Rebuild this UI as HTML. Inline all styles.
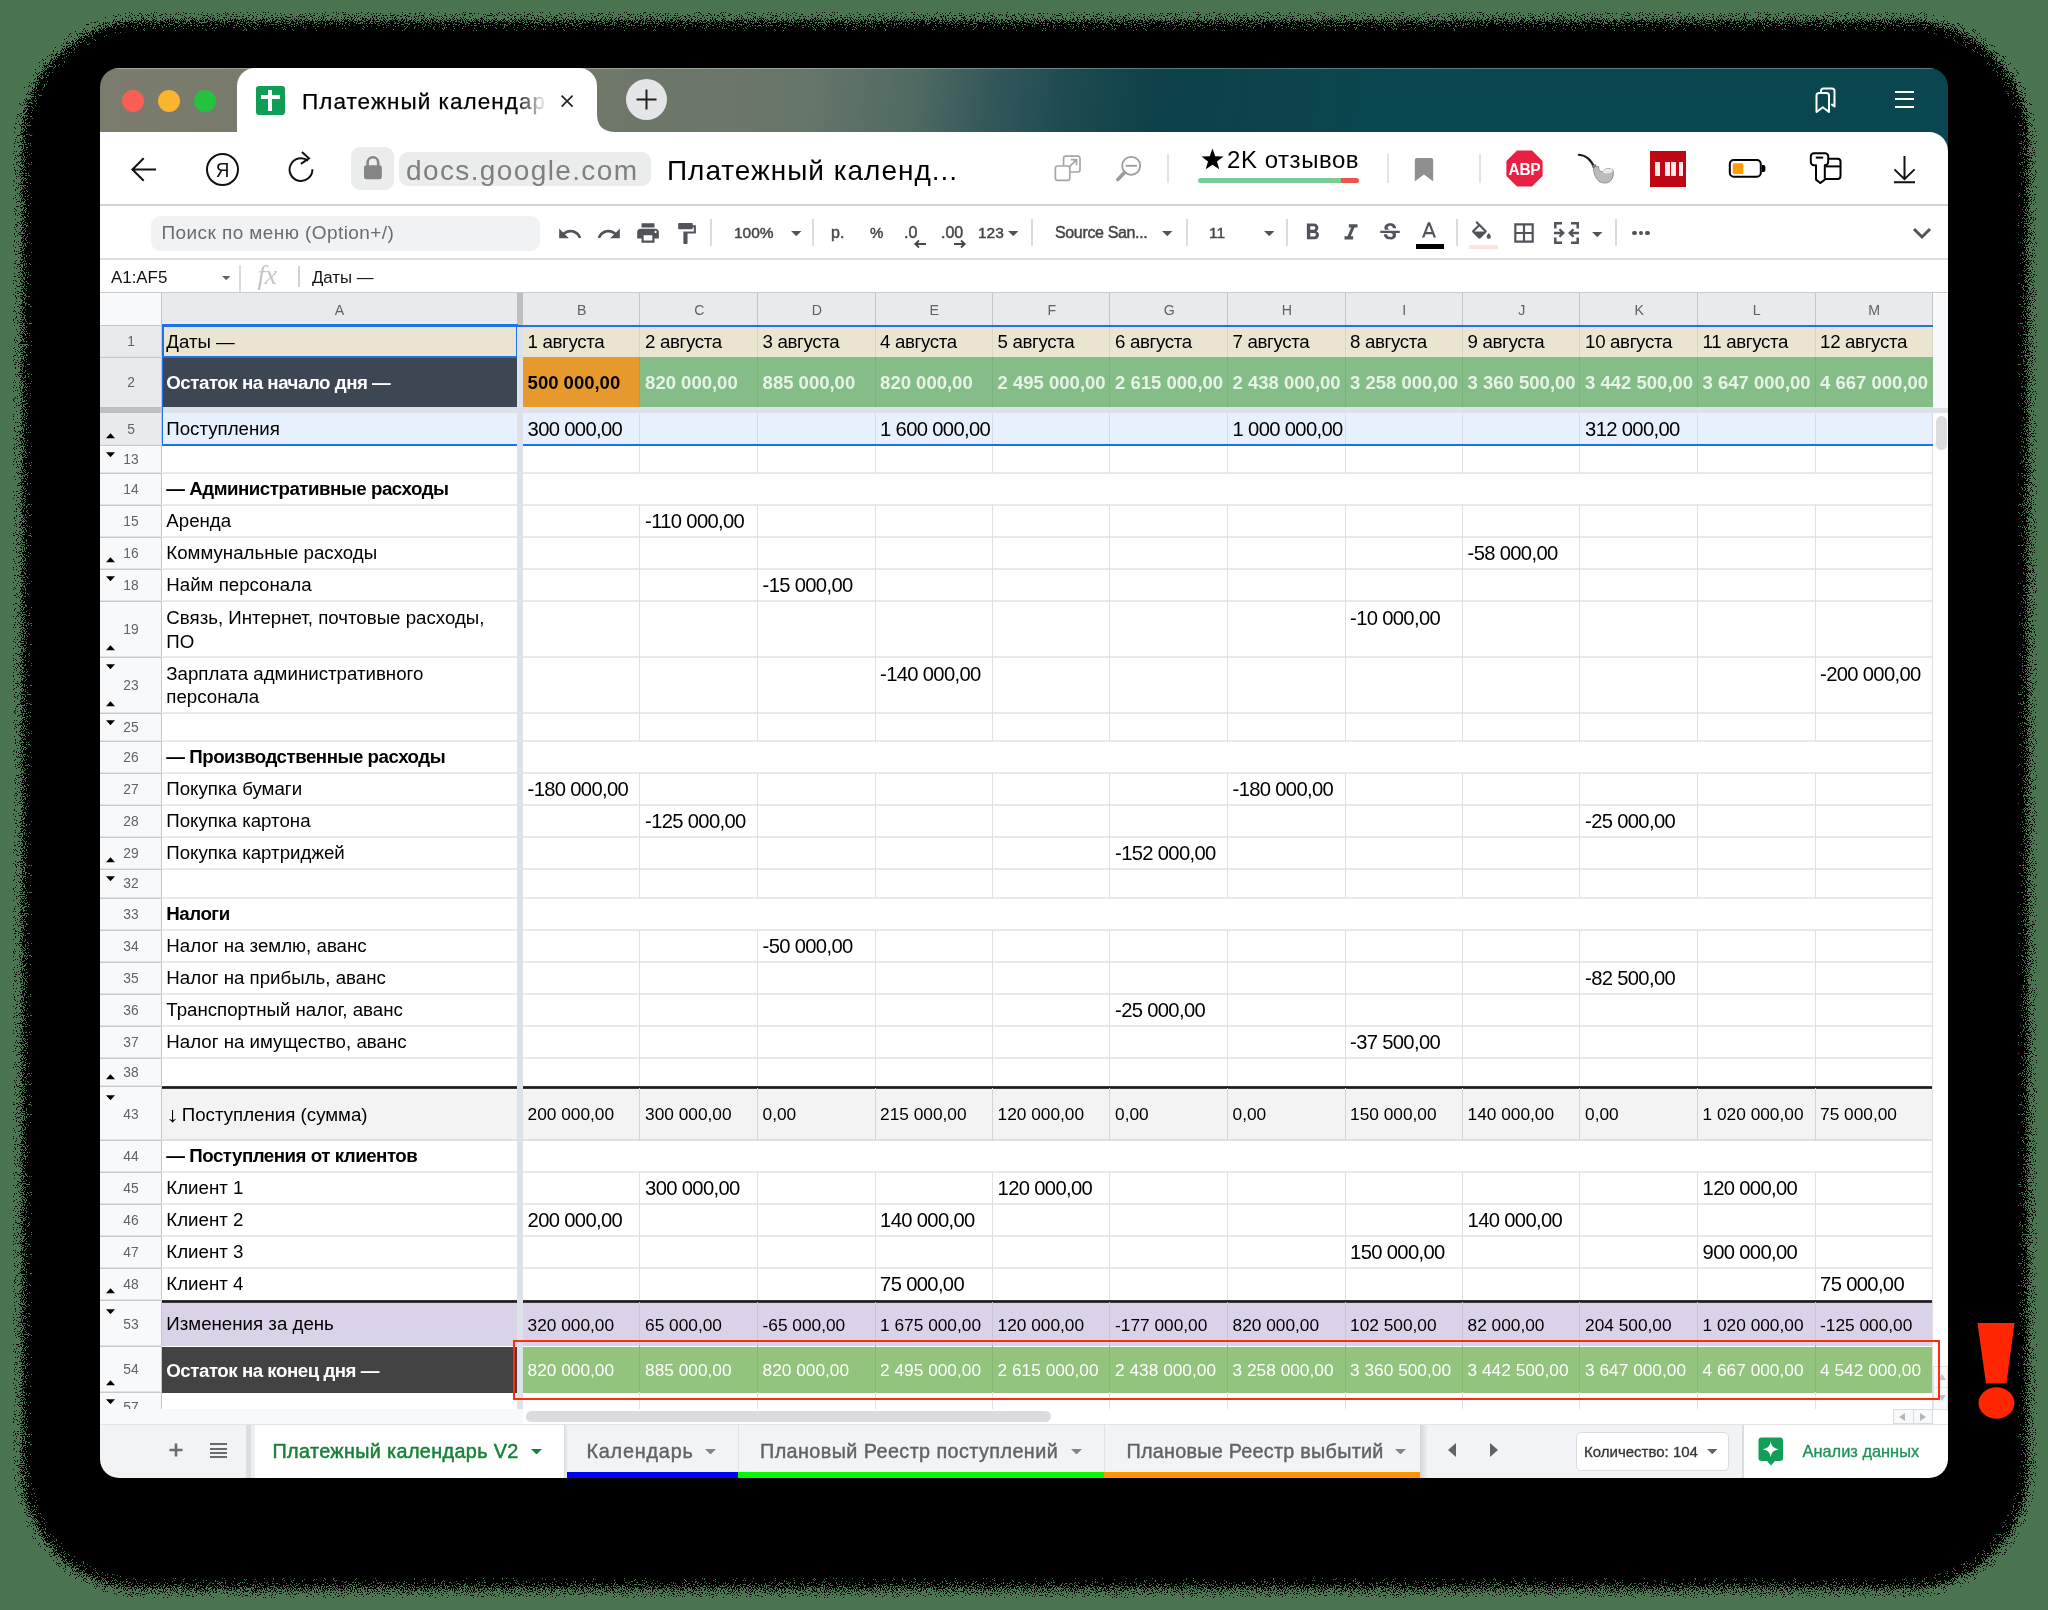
<!DOCTYPE html>
<html><head><meta charset="utf-8"><title>Платежный календарь</title><style>
*{box-sizing:border-box}
html,body{margin:0;padding:0}
body{width:2048px;height:1610px;overflow:hidden;position:relative;background:#4a7350;font-family:"Liberation Sans",sans-serif}
.a{position:absolute}
.t{position:absolute;white-space:nowrap;line-height:1}
#win{position:absolute;left:0;top:0;width:2048px;height:1610px;clip-path:inset(68px 100px 132px 100px round 19px);will-change:transform}
.c{position:absolute;white-space:nowrap;font-size:18.7px;line-height:23.4px;color:#000}
.b{font-weight:bold;letter-spacing:-.47px}
.rh{position:absolute;left:100px;width:62px;text-align:center;font-size:13.8px;color:#5f6368;line-height:16px;height:16px}
.ch{position:absolute;top:294.8px;height:31px;text-align:center;font-size:14.2px;color:#5f6368;line-height:31px}
.tb{position:absolute;font-size:16px;color:#444746;white-space:nowrap;line-height:1;-webkit-text-stroke:.45px #444746}
.sep{position:absolute;width:2px;top:219px;height:27px;background:#dadce0}
.hl{position:absolute;height:2px;background:#e9e9e9}
.vl{position:absolute;width:1px;background:#e1e1e1}
.st{position:absolute;top:1442.3px;font-size:19.8px;line-height:1;white-space:nowrap;color:#5f6368;-webkit-text-stroke:.4px #5f6368;letter-spacing:.4px}
</style></head><body>
<svg class="a" style="left:0;top:0" width="2048" height="1610" viewBox="0 0 2048 1610">
<defs><filter id="dz" x="-3%" y="-3%" width="106%" height="106%" color-interpolation-filters="sRGB">
<feGaussianBlur in="SourceAlpha" stdDeviation="4.6" result="bl"/>
<feTurbulence type="fractalNoise" baseFrequency="0.9" numOctaves="1" seed="7" result="nz"/>
<feColorMatrix in="nz" type="matrix" values="0 0 0 0 0  0 0 0 0 0  0 0 0 0 0  3 0 0 0 -1" result="na"/>
<feComposite in="bl" in2="na" operator="arithmetic" k1="0" k2="1" k3="-1" k4="0" result="d"/>
<feComponentTransfer in="d"><feFuncR type="discrete" tableValues="0"/><feFuncG type="discrete" tableValues="0"/><feFuncB type="discrete" tableValues="0"/><feFuncA type="discrete" tableValues="0 1 1 1 1 1 1 1 1 1 1 1 1 1 1 1 1 1 1 1 1 1 1 1 1 1 1 1 1 1 1 1"/></feComponentTransfer>
</filter></defs>
<rect x="21.5" y="20" width="2007.5" height="1569.5" rx="120" ry="120" fill="#000" filter="url(#dz)"/>
<rect x="32" y="31" width="1986" height="1547" rx="110" fill="#000"/>
</svg>
<svg class="a" style="left:1970px;top:1316px" width="52" height="110" viewBox="1970 1316 52 110"><path d="M1977.5 1323 H2014.5 L2006.5 1383.5 H1986Z" fill="#ff2600"/><ellipse cx="1996.5" cy="1403" rx="18" ry="15.7" fill="#ff2600"/></svg>
<div id="win">
<div class="a" style="left:100px;top:68px;width:1848px;height:1410px;background:#fff"></div>
<div class="a" style="left:100px;top:68px;width:1848px;height:90px;background:linear-gradient(96deg,#7b7c6d 0%,#6f7869 27%,#67766a 38%,#4f6a62 44%,#34585a 48%,#1c4a50 52.5%,#0e4149 57%,#0a4750 70%,#0a4650 100%)"></div>
<div class="a" style="left:100px;top:68px;width:1848px;height:1px;background:rgba(255,255,255,.3)"></div>
<div class="a" style="left:100px;top:132px;width:1848px;height:75px;background:#fff;border-top-right-radius:19px"></div>
<div class="a" style="left:237px;top:68px;width:360px;height:66px;background:#fff;border-radius:18px 18px 0 0"></div>
<svg class="a" style="left:597px;top:114px" width="20" height="18" viewBox="0 0 20 18"><path d="M0 0 C0 12 6 18 20 18 L0 18Z" fill="#fff"/></svg>
<div class="a" style="left:122px;top:89.5px;width:22px;height:22px;border-radius:50%;background:#f95f57"></div>
<div class="a" style="left:158px;top:89.5px;width:22px;height:22px;border-radius:50%;background:#fbb42d"></div>
<div class="a" style="left:194px;top:89.5px;width:22px;height:22px;border-radius:50%;background:#25c23d"></div>
<div class="a" style="left:256px;top:86px;width:29px;height:29px;border-radius:3px;background:#0f9d58"></div>
<div class="a" style="left:261px;top:95px;width:19px;height:4px;background:#fff"></div>
<div class="a" style="left:268px;top:90px;width:4px;height:21px;background:#fff"></div>
<div class="t" style="left:302px;top:88px;height:28px;line-height:28px;font-size:22.5px;letter-spacing:1.05px;color:#000;-webkit-text-stroke:.25px #000;width:250px;overflow:hidden;-webkit-mask-image:linear-gradient(90deg,#000 85%,transparent 98%)">Платежный календарь V2</div>
<svg class="a" style="left:559px;top:93px" width="16" height="16" viewBox="0 0 16 16"><path d="M2.6 2.6 L13.6 13.6 M13.6 2.6 L2.6 13.6" stroke="#222" stroke-width="1.6" fill="none"/></svg>
<div class="a" style="left:626px;top:79px;width:41px;height:41px;border-radius:50%;background:#e4e5e7"></div>
<svg class="a" style="left:626px;top:79px" width="41" height="41" viewBox="0 0 41 41"><path d="M20.5 10.5 V30.5 M10.5 20.5 H30.5" stroke="#222" stroke-width="2" fill="none"/></svg>
<svg class="a" style="left:1810px;top:84px" width="32" height="32" viewBox="0 0 32 32" fill="none" stroke="#fff" stroke-width="2" stroke-linejoin="round"><path d="M6.5 11.5 a2.5 2.5 0 0 1 2.5-2.5 h7.5 a2.5 2.5 0 0 1 2.5 2.5 V28 l-6.2-4.8 L6.5 28Z"/><path d="M11 8.6 V7 a2.5 2.5 0 0 1 2.5-2.5 H22 a2.5 2.5 0 0 1 2.5 2.5 V22.5 l-3.2-2.4"/></svg>
<div class="a" style="left:1895px;top:90.8px;width:18.5px;height:2px;background:#fff"></div>
<div class="a" style="left:1895px;top:98.3px;width:18.5px;height:2px;background:#fff"></div>
<div class="a" style="left:1895px;top:105.9px;width:18.5px;height:2px;background:#fff"></div>
<svg class="a" style="left:126px;top:152px" width="36" height="36" viewBox="126 152 36 36" fill="none" stroke="#111" stroke-width="2"><path d="M156 169.5 H132.5 M143.7 158.2 L132.4 169.5 L143.7 180.8"/></svg>
<div class="a" style="left:206px;top:152.5px;width:33px;height:33px;border-radius:50%;border:2px solid #111"></div>
<div class="t" style="left:206px;top:159px;width:33px;text-align:center;font-size:21px;color:#111;transform:scaleX(.9)">Я</div>
<svg class="a" style="left:284px;top:148px" width="36" height="40" viewBox="284 148 36 40" fill="none" stroke="#111" stroke-width="2" stroke-linejoin="miter"><path d="M308 160.6 A11.4 11.4 0 1 0 312.4 169.3"/><path d="M301.9 152 L309 158.3 L300.9 163.9"/></svg>
<div class="a" style="left:351px;top:147px;width:43px;height:43px;border-radius:9px;background:#ebecec"></div>
<svg class="a" style="left:351px;top:147px" width="43" height="43" viewBox="351 147 43 43"><rect x="364" y="165.3" width="17.8" height="14" rx="2.2" fill="#858585"/><path d="M367.6 166 V162.6 a5.3 5.3 0 0 1 10.6 0 V166" fill="none" stroke="#858585" stroke-width="2.6"/></svg>
<div class="a" style="left:398.5px;top:151.5px;width:252px;height:34.5px;border-radius:9px;background:#ebecec"></div>
<div class="t" style="left:406px;top:156.5px;font-size:28px;letter-spacing:1.38px;color:#7f7f7f">docs.google.com</div>
<div class="t" style="left:667px;top:156.5px;font-size:28px;letter-spacing:.98px;color:#000">Платежный календ...</div>
<svg class="a" style="left:1050px;top:150px" width="36" height="36" viewBox="1050 150 36 36" fill="none" stroke="#a6a6a6" stroke-width="1.7"><rect x="1055.4" y="166" width="14.4" height="14.4" rx="2.2"/><path d="M1063.6 165.6 V158.4 a2.2 2.2 0 0 1 2.2-2.2 H1077.8 a2.2 2.2 0 0 1 2.2 2.2 V169.8 a2.2 2.2 0 0 1-2.2 2.2 H1070.2"/><path d="M1068.8 167.3 L1076.3 159.8 M1070.8 159.6 H1076.5 V165.3"/></svg>
<svg class="a" style="left:1110px;top:150px" width="36" height="36" viewBox="1110 150 36 36" fill="none" stroke="#9b9b9b"><circle cx="1131.2" cy="165.8" r="9" stroke-width="1.8"/><path d="M1125.6 165.8 H1137" stroke-width="1.8"/><path d="M1124.6 172.6 L1117.8 179.4" stroke-width="3.6" stroke-linecap="round"/></svg>
<div class="a" style="left:1167px;top:154px;width:1.5px;height:29px;background:#e4e4e4"></div>
<div class="a" style="left:1387px;top:154px;width:1.5px;height:29px;background:#e4e4e4"></div>
<div class="a" style="left:1479px;top:154px;width:1.5px;height:29px;background:#e4e4e4"></div>
<svg class="a" style="left:1201px;top:148px" width="23" height="22" viewBox="0 0 24 23"><path d="M12 0.5 L14.9 8.6 L23.5 8.8 L16.7 14 L19.1 22.3 L12 17.4 L4.9 22.3 L7.3 14 L0.5 8.8 L9.1 8.6Z" fill="#000"/></svg>
<div class="t" style="left:1227px;top:148px;font-size:24px;letter-spacing:.55px;color:#000">2K отзывов</div>
<div class="a" style="left:1198px;top:177.5px;width:161px;height:5.5px;border-radius:3px;background:linear-gradient(90deg,#7bcb96 0,#7bcb96 143px,#ef5350 143px)"></div>
<svg class="a" style="left:1412px;top:156px" width="24" height="28" viewBox="1412 156 24 28"><path d="M1414.8 160 a2 2 0 0 1 2-2 h14.4 a2 2 0 0 1 2 2 V181.4 L1424 174.4 L1414.8 181.4Z" fill="#8f8f8f"/></svg>
<svg class="a" style="left:1502px;top:146px" width="46" height="46" viewBox="1502 146 46 46"><polygon points="1542.6,176.0 1532.0,186.6 1517.0,186.6 1506.4,176.0 1506.4,161.0 1517.0,150.4 1532.0,150.4 1542.6,161.0" fill="#ea1f44"/></svg>
<div class="t" style="left:1504.5px;top:160.5px;width:40px;text-align:center;font-size:15.5px;font-weight:bold;color:#fff;transform:scaleY(1.12);letter-spacing:-.3px">ABP</div>
<svg class="a" style="left:1574px;top:150px" width="44" height="38" viewBox="1574 150 44 38"><path d="M1578.8 154.8 C1586.5 155.4 1591.5 160 1594.6 168.4" fill="none" stroke="#1a1a1a" stroke-width="2.1" stroke-linecap="round"/><path d="M1592.2 166.8 L1596.2 165.4" stroke="#777" stroke-width="2.6"/><path d="M1593.4 168.6 C1594.2 176 1597.2 183.2 1605.2 183 C1611.6 182.8 1614 176.6 1613.2 170.4 C1610 167.6 1605 168.2 1602.6 171.4 C1600.2 172.2 1598.4 169.8 1598.8 166.8 C1596.8 166 1594.6 166.8 1593.4 168.6Z" fill="#b9bcbc" stroke="#8d9090" stroke-width="1"/><ellipse cx="1607.8" cy="171" rx="5" ry="2.2" fill="#e9eaea" transform="rotate(-8 1607.8 171)"/></svg>
<div class="a" style="left:1650px;top:150.5px;width:36px;height:36px;background:#be0712"></div>
<div class="a" style="left:1655.2px;top:161.6px;width:4.6px;height:14px;background:#fbeaea"></div>
<div class="a" style="left:1664.8px;top:161.6px;width:4.8px;height:14px;background:#fbeaea"></div>
<div class="a" style="left:1671px;top:161.6px;width:4.6px;height:14px;background:#fbeaea"></div>
<div class="a" style="left:1678.6px;top:161.6px;width:4.6px;height:14px;background:#fbeaea"></div>
<svg class="a" style="left:1724px;top:154px" width="46" height="30" viewBox="1724 154 46 30"><rect x="1729.8" y="160.1" width="31" height="16.6" rx="4" fill="#fff" stroke="#000" stroke-width="2"/><path d="M1762 165 h1.4 a2 2 0 0 1 2 2 v3 a2 2 0 0 1-2 2 h-1.4Z" fill="#000"/><rect x="1732.8" y="163.2" width="10.6" height="10.8" rx="1.6" fill="#ff9a00"/></svg>
<svg class="a" style="left:1806px;top:148px" width="40" height="40" viewBox="1806 148 40 40" fill="none" stroke="#000" stroke-width="2" stroke-linejoin="round"><path d="M1827.4 158.8 H1837.5 a3 3 0 0 1 3 3 V176 a3 3 0 0 1-3 3 H1825"/><path d="M1825.5 166.4 H1840.5"/><path d="M1814 153.2 H1825 a3.2 3.2 0 0 1 3.2 3.2 V162 a3.2 3.2 0 0 1-3.2 3.2 H1824.8 V179.6 L1820.3 183 L1816 179.6 V165.2 H1814 a3.2 3.2 0 0 1-3.2-3.2 V156.4 a3.2 3.2 0 0 1 3.2-3.2Z" fill="#fff"/><path d="M1815.8 157.6 H1823.2"/></svg>
<svg class="a" style="left:1888px;top:150px" width="34" height="38" viewBox="1888 150 34 38" fill="none" stroke="#111" stroke-width="2"><path d="M1904.5 156 V178.4 M1894.4 169.4 L1904.5 179.2 L1914.6 169.4 M1894 182.2 H1915"/></svg>
<div class="a" style="left:100px;top:204px;width:1848px;height:2px;background:#d3d4d6"></div>
<div class="a" style="left:151px;top:215.5px;width:389px;height:35px;border-radius:9px;background:#f0f2f4"></div>
<div class="t" style="left:161.5px;top:223px;font-size:19px;letter-spacing:.42px;color:#6b6c6e">Поиск по меню (Option+/)</div>
<svg class="a" style="left:557px;top:220.5px" width="26" height="26" viewBox="0 0 24 24" fill="#50545a"><path d="M12.5 8c-2.65 0-5.05.99-6.9 2.6L2 7v9h9l-3.62-3.62c1.39-1.16 3.16-1.88 5.12-1.88 3.54 0 6.55 2.31 7.6 5.5l2.37-.78C21.08 11.03 17.15 8 12.5 8z"/></svg>
<svg class="a" style="left:596px;top:220.5px" width="26" height="26" viewBox="0 0 24 24" fill="#50545a"><path d="M18.4 10.6C16.55 8.99 14.15 8 11.5 8c-4.65 0-8.58 3.03-9.96 7.22L3.9 16c1.05-3.19 4.05-5.5 7.6-5.5 1.95 0 3.73.72 5.12 1.88L13 16h9V7l-3.6 3.6z"/></svg>
<svg class="a" style="left:634.5px;top:220px" width="26" height="26" viewBox="0 0 24 24" fill="#50545a"><path d="M19 8H5c-1.66 0-3 1.34-3 3v6h4v4h12v-4h4v-6c0-1.66-1.34-3-3-3zm-3 11H8v-5h8v5zm3-7c-.55 0-1-.45-1-1s.45-1 1-1 1 .45 1 1-.45 1-1 1zm-1-9H6v4h12V3z"/></svg>
<svg class="a" style="left:673.5px;top:220.5px" width="25" height="25" viewBox="0 0 24 24" fill="#50545a"><path d="M18 4V3c0-.55-.45-1-1-1H5c-.55 0-1 .45-1 1v4c0 .55.45 1 1 1h12c.55 0 1-.45 1-1V6h1v4H9v11c0 .55.45 1 1 1h2c.55 0 1-.45 1-1v-9h8V4h-3z"/></svg>
<div class="sep" style="left:710px"></div>
<div class="sep" style="left:812px"></div>
<div class="sep" style="left:1031px"></div>
<div class="sep" style="left:1185.5px"></div>
<div class="sep" style="left:1286px"></div>
<div class="sep" style="left:1456px"></div>
<div class="sep" style="left:1614.5px"></div>
<div class="tb" style="left:734px;top:225px;font-size:15.5px">100%</div>
<svg class="a" style="left:791px;top:231px" width="10.5" height="5.2" viewBox="0 0 10 5"><path d="M0 0 H10 L5 5Z" fill="#50545a"/></svg>
<div class="tb" style="left:831px;top:225px">р.</div>
<div class="tb" style="left:870px;top:225px;font-size:15px">%</div>
<div class="tb" style="left:904px;top:225px">.0</div>
<div class="tb" style="left:941px;top:225px">.00</div>
<svg class="a" style="left:913px;top:239px" width="14" height="10" viewBox="0 0 14 10" fill="none" stroke="#444746" stroke-width="1.8"><path d="M13 5 H2.5 M6 1.5 L2.3 5 L6 8.5"/></svg>
<svg class="a" style="left:953px;top:239px" width="14" height="10" viewBox="0 0 14 10" fill="none" stroke="#444746" stroke-width="1.8"><path d="M1 5 H11.5 M8 1.5 L11.7 5 L8 8.5"/></svg>
<div class="tb" style="left:978px;top:225px;font-size:15.5px">123</div>
<svg class="a" style="left:1007.5px;top:231px" width="10.5" height="5.2" viewBox="0 0 10 5"><path d="M0 0 H10 L5 5Z" fill="#50545a"/></svg>
<div class="tb" style="left:1055px;top:225px;letter-spacing:-.35px">Source San...</div>
<svg class="a" style="left:1162px;top:231px" width="10.5" height="5.2" viewBox="0 0 10 5"><path d="M0 0 H10 L5 5Z" fill="#50545a"/></svg>
<div class="tb" style="left:1209px;top:225px;font-size:15.5px">11</div>
<svg class="a" style="left:1263.5px;top:231px" width="10.5" height="5.2" viewBox="0 0 10 5"><path d="M0 0 H10 L5 5Z" fill="#50545a"/></svg>
<svg class="a" style="left:1298.5px;top:218.5px" width="27" height="27" viewBox="0 0 24 24" fill="#50545a"><path d="M15.6 10.79c.97-.67 1.65-1.77 1.65-2.79 0-2.26-1.75-4-4-4H7v14h7.04c2.09 0 3.71-1.7 3.71-3.79 0-1.52-.86-2.82-2.15-3.42zM10 6.5h3c.83 0 1.5.67 1.5 1.5s-.67 1.5-1.5 1.5h-3v-3zm3.5 9H10v-3h3.5c.83 0 1.5.67 1.5 1.5s-.67 1.5-1.5 1.5z"/></svg>
<svg class="a" style="left:1338px;top:219.5px" width="26" height="26" viewBox="0 0 24 24" fill="#50545a"><path d="M10 4v3h2.21l-3.42 8H6v3h8v-3h-2.21l3.42-8H18V4z"/></svg>
<svg class="a" style="left:1376.5px;top:219.5px" width="26" height="26" viewBox="0 0 24 24" fill="#50545a"><path d="M7.24 8.75c-.26-.48-.39-1.03-.39-1.67 0-.61.13-1.16.4-1.67.26-.5.63-.93 1.11-1.29.48-.35 1.05-.63 1.7-.83.66-.19 1.39-.29 2.18-.29.81 0 1.54.11 2.21.34.66.22 1.23.54 1.69.94.47.4.83.88 1.08 1.43.25.55.38 1.15.38 1.81h-3.01c0-.31-.05-.59-.15-.85-.09-.27-.24-.49-.44-.68-.2-.19-.45-.33-.75-.44-.3-.1-.66-.16-1.06-.16-.39 0-.74.04-1.03.13-.29.09-.53.21-.72.36-.19.16-.34.34-.44.55-.1.21-.15.43-.15.66 0 .48.25.88.74 1.21.38.25.77.48 1.41.7H7.39c-.05-.08-.11-.17-.15-.25zM21 12v-2H3v2h9.62c.18.07.4.14.55.2.37.17.66.34.87.51.21.17.35.36.43.57.07.2.11.43.11.69 0 .23-.05.45-.14.66-.09.2-.23.38-.42.53-.19.15-.42.26-.71.35-.29.08-.63.13-1.01.13-.43 0-.83-.04-1.18-.13s-.66-.23-.91-.42c-.25-.19-.45-.44-.59-.75-.14-.31-.25-.76-.25-1.21H6.4c0 .55.08 1.13.24 1.58.16.45.37.85.65 1.21.28.35.6.66.98.92.37.26.78.48 1.22.65.44.17.9.3 1.38.39.48.08.96.13 1.44.13.8 0 1.53-.09 2.18-.28s1.21-.45 1.67-.79c.46-.34.82-.77 1.07-1.27s.38-1.07.38-1.71c0-.6-.1-1.14-.31-1.61-.05-.11-.11-.23-.17-.33H21z"/></svg>
<svg class="a" style="left:1416px;top:218.5px" width="26" height="26" viewBox="0 0 24 24" fill="#50545a"><path d="M11 3L5.5 17h2.25l1.12-3h6.25l1.12 3h2.25L13 3h-2zm-1.38 9L12 5.67 14.38 12H9.62z"/></svg>
<div class="a" style="left:1415.5px;top:244px;width:28.5px;height:5px;background:#000"></div>
<svg class="a" style="left:1469px;top:221px" width="25" height="25" viewBox="0 0 24 24" fill="#50545a"><path d="M16.56 8.94L7.62 0 6.21 1.41l2.38 2.38-5.15 5.15c-.59.59-.59 1.54 0 2.12l5.5 5.5c.29.29.68.44 1.06.44s.77-.15 1.06-.44l5.5-5.5c.59-.58.59-1.53 0-2.12zM5.21 10L10 5.21 14.79 10H5.21zM19 11.5s-2 2.17-2 3.5c0 1.1.9 2 2 2s2-.9 2-2c0-1.33-2-3.5-2-3.5z"/></svg>
<div class="a" style="left:1469px;top:244.5px;width:28.5px;height:4.5px;background:#fbe4dd"></div>
<svg class="a" style="left:1511px;top:220px" width="26" height="26" viewBox="0 0 24 24" fill="#50545a"><path d="M3 3v18h18V3H3zm8 16H5v-6h6v6zm0-8H5V5h6v6zm8 8h-6v-6h6v6zm0-8h-6V5h6v6z"/></svg>
<svg class="a" style="left:1554px;top:222px" width="25" height="22" viewBox="0 0 25 22" fill="none" stroke="#50545a" stroke-width="2.5"><path d="M1.3 6.5 V1.3 H8 M17 1.3 H23.7 V6.5 M1.3 15.5 V20.7 H8 M17 20.7 H23.7 V15.5"/><path d="M0 11 H9 M5.5 7.2 L9.3 11 L5.5 14.8 M25 11 H16 M19.5 7.2 L15.7 11 L19.5 14.8" stroke-width="2.3"/></svg>
<svg class="a" style="left:1592px;top:231.5px" width="10.5" height="5.2" viewBox="0 0 10 5"><path d="M0 0 H10 L5 5Z" fill="#50545a"/></svg>
<div class="a" style="left:1632.3px;top:231px;width:4.4px;height:4.4px;border-radius:50%;background:#50545a"></div>
<div class="a" style="left:1638.8px;top:231px;width:4.4px;height:4.4px;border-radius:50%;background:#50545a"></div>
<div class="a" style="left:1645.3px;top:231px;width:4.4px;height:4.4px;border-radius:50%;background:#50545a"></div>
<svg class="a" style="left:1911px;top:225px" width="22" height="16" viewBox="0 0 22 16" fill="none" stroke="#50545a" stroke-width="3"><path d="M3 4 L11 12 L19 4"/></svg>
<div class="a" style="left:100px;top:258px;width:1848px;height:1.5px;background:#dcdee1"></div>
<div class="t" style="left:111px;top:269.5px;font-size:16.9px;color:#111">A1:AF5</div>
<svg class="a" style="left:222px;top:275.5px" width="8.4" height="4.2" viewBox="0 0 10 5"><path d="M0 0 H10 L5 5Z" fill="#666"/></svg>
<div class="a" style="left:239px;top:265px;width:1.5px;height:27px;background:#dcdcdc"></div>
<div class="t" style="left:257.5px;top:261px;font-family:'Liberation Serif',serif;font-style:italic;font-size:28px;color:#c6c6c6;letter-spacing:-.5px">fx</div>
<div class="a" style="left:298px;top:266px;width:1.5px;height:20.5px;background:#d0d0d0"></div>
<div class="t" style="left:312px;top:269.5px;font-size:16.8px;color:#111">Даты —</div>
<div class="a" style="left:100px;top:292px;width:1848px;height:1.5px;background:#c9cacc"></div>
<div class="a" style="left:100px;top:293px;width:62px;height:32px;background:#f8f9fa;"></div>
<div class="a" style="left:162px;top:293px;width:1771px;height:32px;background:#e8eaed;"></div>
<div class="a" style="left:100px;top:325px;width:62px;height:1100px;background:#f8f9fa;"></div>
<div class="a" style="left:100px;top:325px;width:62px;height:82px;background:#e8eaed;"></div>
<div class="a" style="left:100px;top:413px;width:62px;height:32px;background:#e8eaed;"></div>
<div class="a" style="left:162px;top:325px;width:1771px;height:32px;background:#e9e5d1;"></div>
<div class="a" style="left:162px;top:356.5px;width:355px;height:51px;background:#3d4754;"></div>
<div class="a" style="left:523px;top:356.5px;width:117px;height:51px;background:#e69a2e;"></div>
<div class="a" style="left:640px;top:356.5px;width:1293px;height:51px;background:#85bd88;"></div>
<div class="a" style="left:162px;top:413px;width:1771px;height:32px;background:#e7f0fd;"></div>
<div class="a" style="left:162px;top:1088px;width:1771px;height:52px;background:#f3f3f3;"></div>
<div class="a" style="left:162px;top:1302px;width:1771px;height:44px;background:#d9d2e9;"></div>
<div class="a" style="left:162px;top:1346.5px;width:355px;height:46px;background:#434343;"></div>
<div class="a" style="left:523px;top:1346.5px;width:1410px;height:46px;background:#93c47d;"></div>
<div class="a" style="left:100px;top:407px;width:62px;height:6px;background:#bdbfc2;"></div>
<div class="a" style="left:162px;top:407px;width:1771px;height:6px;background:#dde1ea;"></div>
<div class="a" style="left:517px;top:293px;width:6px;height:32px;background:#bdbfc2;"></div>
<div class="a" style="left:517px;top:325px;width:6px;height:1085px;background:#dde1ea;"></div>
<div class="hl" style="left:162px;top:444px;width:1771px;background:#e9e9e9"></div>
<div class="hl" style="left:162px;top:472px;width:1771px;background:#e9e9e9"></div>
<div class="hl" style="left:162px;top:504px;width:1771px;background:#e9e9e9"></div>
<div class="hl" style="left:162px;top:536px;width:1771px;background:#e9e9e9"></div>
<div class="hl" style="left:162px;top:568px;width:1771px;background:#e9e9e9"></div>
<div class="hl" style="left:162px;top:600px;width:1771px;background:#e9e9e9"></div>
<div class="hl" style="left:162px;top:656px;width:1771px;background:#e9e9e9"></div>
<div class="hl" style="left:162px;top:712px;width:1771px;background:#e9e9e9"></div>
<div class="hl" style="left:162px;top:740px;width:1771px;background:#e9e9e9"></div>
<div class="hl" style="left:162px;top:772px;width:1771px;background:#e9e9e9"></div>
<div class="hl" style="left:162px;top:804px;width:1771px;background:#e9e9e9"></div>
<div class="hl" style="left:162px;top:836px;width:1771px;background:#e9e9e9"></div>
<div class="hl" style="left:162px;top:868px;width:1771px;background:#e9e9e9"></div>
<div class="hl" style="left:162px;top:897px;width:1771px;background:#e9e9e9"></div>
<div class="hl" style="left:162px;top:929px;width:1771px;background:#e9e9e9"></div>
<div class="hl" style="left:162px;top:961px;width:1771px;background:#e9e9e9"></div>
<div class="hl" style="left:162px;top:993px;width:1771px;background:#e9e9e9"></div>
<div class="hl" style="left:162px;top:1025px;width:1771px;background:#e9e9e9"></div>
<div class="hl" style="left:162px;top:1057px;width:1771px;background:#e9e9e9"></div>
<div class="hl" style="left:162px;top:1139px;width:1771px;background:#e0e0e0"></div>
<div class="hl" style="left:162px;top:1171px;width:1771px;background:#e9e9e9"></div>
<div class="hl" style="left:162px;top:1203px;width:1771px;background:#e9e9e9"></div>
<div class="hl" style="left:162px;top:1235px;width:1771px;background:#e9e9e9"></div>
<div class="hl" style="left:162px;top:1267px;width:1771px;background:#e9e9e9"></div>
<div class="a" style="left:162px;top:1086px;width:1771px;height:3px;background:linear-gradient(#555 0,#1d1d1d 30%,#1d1d1d 75%,#777 100%);"></div>
<div class="a" style="left:162px;top:1300px;width:1771px;height:3px;background:linear-gradient(#555 0,#1d1d1d 30%,#1d1d1d 75%,#777 100%);"></div>
<div class="vl" style="left:639px;top:325px;height:32px;background:#d9d6c4"></div>
<div class="vl" style="left:639px;top:357px;height:50px;background:#d9912b"></div>
<div class="vl" style="left:639px;top:413px;height:32px;background:#d5dce8"></div>
<div class="vl" style="left:639px;top:445px;height:28px;background:#e1e1e1"></div>
<div class="vl" style="left:639px;top:505px;height:32px;background:#e1e1e1"></div>
<div class="vl" style="left:639px;top:537px;height:32px;background:#e1e1e1"></div>
<div class="vl" style="left:639px;top:569px;height:32px;background:#e1e1e1"></div>
<div class="vl" style="left:639px;top:601px;height:56px;background:#e1e1e1"></div>
<div class="vl" style="left:639px;top:657px;height:56px;background:#e1e1e1"></div>
<div class="vl" style="left:639px;top:713px;height:28px;background:#e1e1e1"></div>
<div class="vl" style="left:639px;top:773px;height:32px;background:#e1e1e1"></div>
<div class="vl" style="left:639px;top:805px;height:32px;background:#e1e1e1"></div>
<div class="vl" style="left:639px;top:837px;height:32px;background:#e1e1e1"></div>
<div class="vl" style="left:639px;top:869px;height:29px;background:#e1e1e1"></div>
<div class="vl" style="left:639px;top:930px;height:32px;background:#e1e1e1"></div>
<div class="vl" style="left:639px;top:962px;height:32px;background:#e1e1e1"></div>
<div class="vl" style="left:639px;top:994px;height:32px;background:#e1e1e1"></div>
<div class="vl" style="left:639px;top:1026px;height:32px;background:#e1e1e1"></div>
<div class="vl" style="left:639px;top:1058px;height:28px;background:#e1e1e1"></div>
<div class="vl" style="left:639px;top:1088px;height:52px;background:#d4d4d4"></div>
<div class="vl" style="left:639px;top:1172px;height:32px;background:#e1e1e1"></div>
<div class="vl" style="left:639px;top:1204px;height:32px;background:#e1e1e1"></div>
<div class="vl" style="left:639px;top:1236px;height:32px;background:#e1e1e1"></div>
<div class="vl" style="left:639px;top:1268px;height:32px;background:#e1e1e1"></div>
<div class="vl" style="left:639px;top:1302px;height:44px;background:#c9c2d9"></div>
<div class="vl" style="left:639px;top:1346px;height:46px;background:#86b672"></div>
<div class="vl" style="left:639px;top:1392px;height:17px;background:#e1e1e1"></div>
<div class="vl" style="left:757px;top:325px;height:32px;background:#d9d6c4"></div>
<div class="vl" style="left:757px;top:357px;height:50px;background:#7bb17e"></div>
<div class="vl" style="left:757px;top:413px;height:32px;background:#d5dce8"></div>
<div class="vl" style="left:757px;top:445px;height:28px;background:#e1e1e1"></div>
<div class="vl" style="left:757px;top:505px;height:32px;background:#e1e1e1"></div>
<div class="vl" style="left:757px;top:537px;height:32px;background:#e1e1e1"></div>
<div class="vl" style="left:757px;top:569px;height:32px;background:#e1e1e1"></div>
<div class="vl" style="left:757px;top:601px;height:56px;background:#e1e1e1"></div>
<div class="vl" style="left:757px;top:657px;height:56px;background:#e1e1e1"></div>
<div class="vl" style="left:757px;top:713px;height:28px;background:#e1e1e1"></div>
<div class="vl" style="left:757px;top:773px;height:32px;background:#e1e1e1"></div>
<div class="vl" style="left:757px;top:805px;height:32px;background:#e1e1e1"></div>
<div class="vl" style="left:757px;top:837px;height:32px;background:#e1e1e1"></div>
<div class="vl" style="left:757px;top:869px;height:29px;background:#e1e1e1"></div>
<div class="vl" style="left:757px;top:930px;height:32px;background:#e1e1e1"></div>
<div class="vl" style="left:757px;top:962px;height:32px;background:#e1e1e1"></div>
<div class="vl" style="left:757px;top:994px;height:32px;background:#e1e1e1"></div>
<div class="vl" style="left:757px;top:1026px;height:32px;background:#e1e1e1"></div>
<div class="vl" style="left:757px;top:1058px;height:28px;background:#e1e1e1"></div>
<div class="vl" style="left:757px;top:1088px;height:52px;background:#d4d4d4"></div>
<div class="vl" style="left:757px;top:1172px;height:32px;background:#e1e1e1"></div>
<div class="vl" style="left:757px;top:1204px;height:32px;background:#e1e1e1"></div>
<div class="vl" style="left:757px;top:1236px;height:32px;background:#e1e1e1"></div>
<div class="vl" style="left:757px;top:1268px;height:32px;background:#e1e1e1"></div>
<div class="vl" style="left:757px;top:1302px;height:44px;background:#c9c2d9"></div>
<div class="vl" style="left:757px;top:1346px;height:46px;background:#86b672"></div>
<div class="vl" style="left:757px;top:1392px;height:17px;background:#e1e1e1"></div>
<div class="vl" style="left:875px;top:325px;height:32px;background:#d9d6c4"></div>
<div class="vl" style="left:875px;top:357px;height:50px;background:#7bb17e"></div>
<div class="vl" style="left:875px;top:413px;height:32px;background:#d5dce8"></div>
<div class="vl" style="left:875px;top:445px;height:28px;background:#e1e1e1"></div>
<div class="vl" style="left:875px;top:505px;height:32px;background:#e1e1e1"></div>
<div class="vl" style="left:875px;top:537px;height:32px;background:#e1e1e1"></div>
<div class="vl" style="left:875px;top:569px;height:32px;background:#e1e1e1"></div>
<div class="vl" style="left:875px;top:601px;height:56px;background:#e1e1e1"></div>
<div class="vl" style="left:875px;top:657px;height:56px;background:#e1e1e1"></div>
<div class="vl" style="left:875px;top:713px;height:28px;background:#e1e1e1"></div>
<div class="vl" style="left:875px;top:773px;height:32px;background:#e1e1e1"></div>
<div class="vl" style="left:875px;top:805px;height:32px;background:#e1e1e1"></div>
<div class="vl" style="left:875px;top:837px;height:32px;background:#e1e1e1"></div>
<div class="vl" style="left:875px;top:869px;height:29px;background:#e1e1e1"></div>
<div class="vl" style="left:875px;top:930px;height:32px;background:#e1e1e1"></div>
<div class="vl" style="left:875px;top:962px;height:32px;background:#e1e1e1"></div>
<div class="vl" style="left:875px;top:994px;height:32px;background:#e1e1e1"></div>
<div class="vl" style="left:875px;top:1026px;height:32px;background:#e1e1e1"></div>
<div class="vl" style="left:875px;top:1058px;height:28px;background:#e1e1e1"></div>
<div class="vl" style="left:875px;top:1088px;height:52px;background:#d4d4d4"></div>
<div class="vl" style="left:875px;top:1172px;height:32px;background:#e1e1e1"></div>
<div class="vl" style="left:875px;top:1204px;height:32px;background:#e1e1e1"></div>
<div class="vl" style="left:875px;top:1236px;height:32px;background:#e1e1e1"></div>
<div class="vl" style="left:875px;top:1268px;height:32px;background:#e1e1e1"></div>
<div class="vl" style="left:875px;top:1302px;height:44px;background:#c9c2d9"></div>
<div class="vl" style="left:875px;top:1346px;height:46px;background:#86b672"></div>
<div class="vl" style="left:875px;top:1392px;height:17px;background:#e1e1e1"></div>
<div class="vl" style="left:992px;top:325px;height:32px;background:#d9d6c4"></div>
<div class="vl" style="left:992px;top:357px;height:50px;background:#7bb17e"></div>
<div class="vl" style="left:992px;top:413px;height:32px;background:#d5dce8"></div>
<div class="vl" style="left:992px;top:445px;height:28px;background:#e1e1e1"></div>
<div class="vl" style="left:992px;top:505px;height:32px;background:#e1e1e1"></div>
<div class="vl" style="left:992px;top:537px;height:32px;background:#e1e1e1"></div>
<div class="vl" style="left:992px;top:569px;height:32px;background:#e1e1e1"></div>
<div class="vl" style="left:992px;top:601px;height:56px;background:#e1e1e1"></div>
<div class="vl" style="left:992px;top:657px;height:56px;background:#e1e1e1"></div>
<div class="vl" style="left:992px;top:713px;height:28px;background:#e1e1e1"></div>
<div class="vl" style="left:992px;top:773px;height:32px;background:#e1e1e1"></div>
<div class="vl" style="left:992px;top:805px;height:32px;background:#e1e1e1"></div>
<div class="vl" style="left:992px;top:837px;height:32px;background:#e1e1e1"></div>
<div class="vl" style="left:992px;top:869px;height:29px;background:#e1e1e1"></div>
<div class="vl" style="left:992px;top:930px;height:32px;background:#e1e1e1"></div>
<div class="vl" style="left:992px;top:962px;height:32px;background:#e1e1e1"></div>
<div class="vl" style="left:992px;top:994px;height:32px;background:#e1e1e1"></div>
<div class="vl" style="left:992px;top:1026px;height:32px;background:#e1e1e1"></div>
<div class="vl" style="left:992px;top:1058px;height:28px;background:#e1e1e1"></div>
<div class="vl" style="left:992px;top:1088px;height:52px;background:#d4d4d4"></div>
<div class="vl" style="left:992px;top:1172px;height:32px;background:#e1e1e1"></div>
<div class="vl" style="left:992px;top:1204px;height:32px;background:#e1e1e1"></div>
<div class="vl" style="left:992px;top:1236px;height:32px;background:#e1e1e1"></div>
<div class="vl" style="left:992px;top:1268px;height:32px;background:#e1e1e1"></div>
<div class="vl" style="left:992px;top:1302px;height:44px;background:#c9c2d9"></div>
<div class="vl" style="left:992px;top:1346px;height:46px;background:#86b672"></div>
<div class="vl" style="left:992px;top:1392px;height:17px;background:#e1e1e1"></div>
<div class="vl" style="left:1109px;top:325px;height:32px;background:#d9d6c4"></div>
<div class="vl" style="left:1109px;top:357px;height:50px;background:#7bb17e"></div>
<div class="vl" style="left:1109px;top:413px;height:32px;background:#d5dce8"></div>
<div class="vl" style="left:1109px;top:445px;height:28px;background:#e1e1e1"></div>
<div class="vl" style="left:1109px;top:505px;height:32px;background:#e1e1e1"></div>
<div class="vl" style="left:1109px;top:537px;height:32px;background:#e1e1e1"></div>
<div class="vl" style="left:1109px;top:569px;height:32px;background:#e1e1e1"></div>
<div class="vl" style="left:1109px;top:601px;height:56px;background:#e1e1e1"></div>
<div class="vl" style="left:1109px;top:657px;height:56px;background:#e1e1e1"></div>
<div class="vl" style="left:1109px;top:713px;height:28px;background:#e1e1e1"></div>
<div class="vl" style="left:1109px;top:773px;height:32px;background:#e1e1e1"></div>
<div class="vl" style="left:1109px;top:805px;height:32px;background:#e1e1e1"></div>
<div class="vl" style="left:1109px;top:837px;height:32px;background:#e1e1e1"></div>
<div class="vl" style="left:1109px;top:869px;height:29px;background:#e1e1e1"></div>
<div class="vl" style="left:1109px;top:930px;height:32px;background:#e1e1e1"></div>
<div class="vl" style="left:1109px;top:962px;height:32px;background:#e1e1e1"></div>
<div class="vl" style="left:1109px;top:994px;height:32px;background:#e1e1e1"></div>
<div class="vl" style="left:1109px;top:1026px;height:32px;background:#e1e1e1"></div>
<div class="vl" style="left:1109px;top:1058px;height:28px;background:#e1e1e1"></div>
<div class="vl" style="left:1109px;top:1088px;height:52px;background:#d4d4d4"></div>
<div class="vl" style="left:1109px;top:1172px;height:32px;background:#e1e1e1"></div>
<div class="vl" style="left:1109px;top:1204px;height:32px;background:#e1e1e1"></div>
<div class="vl" style="left:1109px;top:1236px;height:32px;background:#e1e1e1"></div>
<div class="vl" style="left:1109px;top:1268px;height:32px;background:#e1e1e1"></div>
<div class="vl" style="left:1109px;top:1302px;height:44px;background:#c9c2d9"></div>
<div class="vl" style="left:1109px;top:1346px;height:46px;background:#86b672"></div>
<div class="vl" style="left:1109px;top:1392px;height:17px;background:#e1e1e1"></div>
<div class="vl" style="left:1227px;top:325px;height:32px;background:#d9d6c4"></div>
<div class="vl" style="left:1227px;top:357px;height:50px;background:#7bb17e"></div>
<div class="vl" style="left:1227px;top:413px;height:32px;background:#d5dce8"></div>
<div class="vl" style="left:1227px;top:445px;height:28px;background:#e1e1e1"></div>
<div class="vl" style="left:1227px;top:505px;height:32px;background:#e1e1e1"></div>
<div class="vl" style="left:1227px;top:537px;height:32px;background:#e1e1e1"></div>
<div class="vl" style="left:1227px;top:569px;height:32px;background:#e1e1e1"></div>
<div class="vl" style="left:1227px;top:601px;height:56px;background:#e1e1e1"></div>
<div class="vl" style="left:1227px;top:657px;height:56px;background:#e1e1e1"></div>
<div class="vl" style="left:1227px;top:713px;height:28px;background:#e1e1e1"></div>
<div class="vl" style="left:1227px;top:773px;height:32px;background:#e1e1e1"></div>
<div class="vl" style="left:1227px;top:805px;height:32px;background:#e1e1e1"></div>
<div class="vl" style="left:1227px;top:837px;height:32px;background:#e1e1e1"></div>
<div class="vl" style="left:1227px;top:869px;height:29px;background:#e1e1e1"></div>
<div class="vl" style="left:1227px;top:930px;height:32px;background:#e1e1e1"></div>
<div class="vl" style="left:1227px;top:962px;height:32px;background:#e1e1e1"></div>
<div class="vl" style="left:1227px;top:994px;height:32px;background:#e1e1e1"></div>
<div class="vl" style="left:1227px;top:1026px;height:32px;background:#e1e1e1"></div>
<div class="vl" style="left:1227px;top:1058px;height:28px;background:#e1e1e1"></div>
<div class="vl" style="left:1227px;top:1088px;height:52px;background:#d4d4d4"></div>
<div class="vl" style="left:1227px;top:1172px;height:32px;background:#e1e1e1"></div>
<div class="vl" style="left:1227px;top:1204px;height:32px;background:#e1e1e1"></div>
<div class="vl" style="left:1227px;top:1236px;height:32px;background:#e1e1e1"></div>
<div class="vl" style="left:1227px;top:1268px;height:32px;background:#e1e1e1"></div>
<div class="vl" style="left:1227px;top:1302px;height:44px;background:#c9c2d9"></div>
<div class="vl" style="left:1227px;top:1346px;height:46px;background:#86b672"></div>
<div class="vl" style="left:1227px;top:1392px;height:17px;background:#e1e1e1"></div>
<div class="vl" style="left:1345px;top:325px;height:32px;background:#d9d6c4"></div>
<div class="vl" style="left:1345px;top:357px;height:50px;background:#7bb17e"></div>
<div class="vl" style="left:1345px;top:413px;height:32px;background:#d5dce8"></div>
<div class="vl" style="left:1345px;top:445px;height:28px;background:#e1e1e1"></div>
<div class="vl" style="left:1345px;top:505px;height:32px;background:#e1e1e1"></div>
<div class="vl" style="left:1345px;top:537px;height:32px;background:#e1e1e1"></div>
<div class="vl" style="left:1345px;top:569px;height:32px;background:#e1e1e1"></div>
<div class="vl" style="left:1345px;top:601px;height:56px;background:#e1e1e1"></div>
<div class="vl" style="left:1345px;top:657px;height:56px;background:#e1e1e1"></div>
<div class="vl" style="left:1345px;top:713px;height:28px;background:#e1e1e1"></div>
<div class="vl" style="left:1345px;top:773px;height:32px;background:#e1e1e1"></div>
<div class="vl" style="left:1345px;top:805px;height:32px;background:#e1e1e1"></div>
<div class="vl" style="left:1345px;top:837px;height:32px;background:#e1e1e1"></div>
<div class="vl" style="left:1345px;top:869px;height:29px;background:#e1e1e1"></div>
<div class="vl" style="left:1345px;top:930px;height:32px;background:#e1e1e1"></div>
<div class="vl" style="left:1345px;top:962px;height:32px;background:#e1e1e1"></div>
<div class="vl" style="left:1345px;top:994px;height:32px;background:#e1e1e1"></div>
<div class="vl" style="left:1345px;top:1026px;height:32px;background:#e1e1e1"></div>
<div class="vl" style="left:1345px;top:1058px;height:28px;background:#e1e1e1"></div>
<div class="vl" style="left:1345px;top:1088px;height:52px;background:#d4d4d4"></div>
<div class="vl" style="left:1345px;top:1172px;height:32px;background:#e1e1e1"></div>
<div class="vl" style="left:1345px;top:1204px;height:32px;background:#e1e1e1"></div>
<div class="vl" style="left:1345px;top:1236px;height:32px;background:#e1e1e1"></div>
<div class="vl" style="left:1345px;top:1268px;height:32px;background:#e1e1e1"></div>
<div class="vl" style="left:1345px;top:1302px;height:44px;background:#c9c2d9"></div>
<div class="vl" style="left:1345px;top:1346px;height:46px;background:#86b672"></div>
<div class="vl" style="left:1345px;top:1392px;height:17px;background:#e1e1e1"></div>
<div class="vl" style="left:1462px;top:325px;height:32px;background:#d9d6c4"></div>
<div class="vl" style="left:1462px;top:357px;height:50px;background:#7bb17e"></div>
<div class="vl" style="left:1462px;top:413px;height:32px;background:#d5dce8"></div>
<div class="vl" style="left:1462px;top:445px;height:28px;background:#e1e1e1"></div>
<div class="vl" style="left:1462px;top:505px;height:32px;background:#e1e1e1"></div>
<div class="vl" style="left:1462px;top:537px;height:32px;background:#e1e1e1"></div>
<div class="vl" style="left:1462px;top:569px;height:32px;background:#e1e1e1"></div>
<div class="vl" style="left:1462px;top:601px;height:56px;background:#e1e1e1"></div>
<div class="vl" style="left:1462px;top:657px;height:56px;background:#e1e1e1"></div>
<div class="vl" style="left:1462px;top:713px;height:28px;background:#e1e1e1"></div>
<div class="vl" style="left:1462px;top:773px;height:32px;background:#e1e1e1"></div>
<div class="vl" style="left:1462px;top:805px;height:32px;background:#e1e1e1"></div>
<div class="vl" style="left:1462px;top:837px;height:32px;background:#e1e1e1"></div>
<div class="vl" style="left:1462px;top:869px;height:29px;background:#e1e1e1"></div>
<div class="vl" style="left:1462px;top:930px;height:32px;background:#e1e1e1"></div>
<div class="vl" style="left:1462px;top:962px;height:32px;background:#e1e1e1"></div>
<div class="vl" style="left:1462px;top:994px;height:32px;background:#e1e1e1"></div>
<div class="vl" style="left:1462px;top:1026px;height:32px;background:#e1e1e1"></div>
<div class="vl" style="left:1462px;top:1058px;height:28px;background:#e1e1e1"></div>
<div class="vl" style="left:1462px;top:1088px;height:52px;background:#d4d4d4"></div>
<div class="vl" style="left:1462px;top:1172px;height:32px;background:#e1e1e1"></div>
<div class="vl" style="left:1462px;top:1204px;height:32px;background:#e1e1e1"></div>
<div class="vl" style="left:1462px;top:1236px;height:32px;background:#e1e1e1"></div>
<div class="vl" style="left:1462px;top:1268px;height:32px;background:#e1e1e1"></div>
<div class="vl" style="left:1462px;top:1302px;height:44px;background:#c9c2d9"></div>
<div class="vl" style="left:1462px;top:1346px;height:46px;background:#86b672"></div>
<div class="vl" style="left:1462px;top:1392px;height:17px;background:#e1e1e1"></div>
<div class="vl" style="left:1579px;top:325px;height:32px;background:#d9d6c4"></div>
<div class="vl" style="left:1579px;top:357px;height:50px;background:#7bb17e"></div>
<div class="vl" style="left:1579px;top:413px;height:32px;background:#d5dce8"></div>
<div class="vl" style="left:1579px;top:445px;height:28px;background:#e1e1e1"></div>
<div class="vl" style="left:1579px;top:505px;height:32px;background:#e1e1e1"></div>
<div class="vl" style="left:1579px;top:537px;height:32px;background:#e1e1e1"></div>
<div class="vl" style="left:1579px;top:569px;height:32px;background:#e1e1e1"></div>
<div class="vl" style="left:1579px;top:601px;height:56px;background:#e1e1e1"></div>
<div class="vl" style="left:1579px;top:657px;height:56px;background:#e1e1e1"></div>
<div class="vl" style="left:1579px;top:713px;height:28px;background:#e1e1e1"></div>
<div class="vl" style="left:1579px;top:773px;height:32px;background:#e1e1e1"></div>
<div class="vl" style="left:1579px;top:805px;height:32px;background:#e1e1e1"></div>
<div class="vl" style="left:1579px;top:837px;height:32px;background:#e1e1e1"></div>
<div class="vl" style="left:1579px;top:869px;height:29px;background:#e1e1e1"></div>
<div class="vl" style="left:1579px;top:930px;height:32px;background:#e1e1e1"></div>
<div class="vl" style="left:1579px;top:962px;height:32px;background:#e1e1e1"></div>
<div class="vl" style="left:1579px;top:994px;height:32px;background:#e1e1e1"></div>
<div class="vl" style="left:1579px;top:1026px;height:32px;background:#e1e1e1"></div>
<div class="vl" style="left:1579px;top:1058px;height:28px;background:#e1e1e1"></div>
<div class="vl" style="left:1579px;top:1088px;height:52px;background:#d4d4d4"></div>
<div class="vl" style="left:1579px;top:1172px;height:32px;background:#e1e1e1"></div>
<div class="vl" style="left:1579px;top:1204px;height:32px;background:#e1e1e1"></div>
<div class="vl" style="left:1579px;top:1236px;height:32px;background:#e1e1e1"></div>
<div class="vl" style="left:1579px;top:1268px;height:32px;background:#e1e1e1"></div>
<div class="vl" style="left:1579px;top:1302px;height:44px;background:#c9c2d9"></div>
<div class="vl" style="left:1579px;top:1346px;height:46px;background:#86b672"></div>
<div class="vl" style="left:1579px;top:1392px;height:17px;background:#e1e1e1"></div>
<div class="vl" style="left:1697px;top:325px;height:32px;background:#d9d6c4"></div>
<div class="vl" style="left:1697px;top:357px;height:50px;background:#7bb17e"></div>
<div class="vl" style="left:1697px;top:413px;height:32px;background:#d5dce8"></div>
<div class="vl" style="left:1697px;top:445px;height:28px;background:#e1e1e1"></div>
<div class="vl" style="left:1697px;top:505px;height:32px;background:#e1e1e1"></div>
<div class="vl" style="left:1697px;top:537px;height:32px;background:#e1e1e1"></div>
<div class="vl" style="left:1697px;top:569px;height:32px;background:#e1e1e1"></div>
<div class="vl" style="left:1697px;top:601px;height:56px;background:#e1e1e1"></div>
<div class="vl" style="left:1697px;top:657px;height:56px;background:#e1e1e1"></div>
<div class="vl" style="left:1697px;top:713px;height:28px;background:#e1e1e1"></div>
<div class="vl" style="left:1697px;top:773px;height:32px;background:#e1e1e1"></div>
<div class="vl" style="left:1697px;top:805px;height:32px;background:#e1e1e1"></div>
<div class="vl" style="left:1697px;top:837px;height:32px;background:#e1e1e1"></div>
<div class="vl" style="left:1697px;top:869px;height:29px;background:#e1e1e1"></div>
<div class="vl" style="left:1697px;top:930px;height:32px;background:#e1e1e1"></div>
<div class="vl" style="left:1697px;top:962px;height:32px;background:#e1e1e1"></div>
<div class="vl" style="left:1697px;top:994px;height:32px;background:#e1e1e1"></div>
<div class="vl" style="left:1697px;top:1026px;height:32px;background:#e1e1e1"></div>
<div class="vl" style="left:1697px;top:1058px;height:28px;background:#e1e1e1"></div>
<div class="vl" style="left:1697px;top:1088px;height:52px;background:#d4d4d4"></div>
<div class="vl" style="left:1697px;top:1172px;height:32px;background:#e1e1e1"></div>
<div class="vl" style="left:1697px;top:1204px;height:32px;background:#e1e1e1"></div>
<div class="vl" style="left:1697px;top:1236px;height:32px;background:#e1e1e1"></div>
<div class="vl" style="left:1697px;top:1268px;height:32px;background:#e1e1e1"></div>
<div class="vl" style="left:1697px;top:1302px;height:44px;background:#c9c2d9"></div>
<div class="vl" style="left:1697px;top:1346px;height:46px;background:#86b672"></div>
<div class="vl" style="left:1697px;top:1392px;height:17px;background:#e1e1e1"></div>
<div class="vl" style="left:1815px;top:325px;height:32px;background:#d9d6c4"></div>
<div class="vl" style="left:1815px;top:357px;height:50px;background:#7bb17e"></div>
<div class="vl" style="left:1815px;top:413px;height:32px;background:#d5dce8"></div>
<div class="vl" style="left:1815px;top:445px;height:28px;background:#e1e1e1"></div>
<div class="vl" style="left:1815px;top:505px;height:32px;background:#e1e1e1"></div>
<div class="vl" style="left:1815px;top:537px;height:32px;background:#e1e1e1"></div>
<div class="vl" style="left:1815px;top:569px;height:32px;background:#e1e1e1"></div>
<div class="vl" style="left:1815px;top:601px;height:56px;background:#e1e1e1"></div>
<div class="vl" style="left:1815px;top:657px;height:56px;background:#e1e1e1"></div>
<div class="vl" style="left:1815px;top:713px;height:28px;background:#e1e1e1"></div>
<div class="vl" style="left:1815px;top:773px;height:32px;background:#e1e1e1"></div>
<div class="vl" style="left:1815px;top:805px;height:32px;background:#e1e1e1"></div>
<div class="vl" style="left:1815px;top:837px;height:32px;background:#e1e1e1"></div>
<div class="vl" style="left:1815px;top:869px;height:29px;background:#e1e1e1"></div>
<div class="vl" style="left:1815px;top:930px;height:32px;background:#e1e1e1"></div>
<div class="vl" style="left:1815px;top:962px;height:32px;background:#e1e1e1"></div>
<div class="vl" style="left:1815px;top:994px;height:32px;background:#e1e1e1"></div>
<div class="vl" style="left:1815px;top:1026px;height:32px;background:#e1e1e1"></div>
<div class="vl" style="left:1815px;top:1058px;height:28px;background:#e1e1e1"></div>
<div class="vl" style="left:1815px;top:1088px;height:52px;background:#d4d4d4"></div>
<div class="vl" style="left:1815px;top:1172px;height:32px;background:#e1e1e1"></div>
<div class="vl" style="left:1815px;top:1204px;height:32px;background:#e1e1e1"></div>
<div class="vl" style="left:1815px;top:1236px;height:32px;background:#e1e1e1"></div>
<div class="vl" style="left:1815px;top:1268px;height:32px;background:#e1e1e1"></div>
<div class="vl" style="left:1815px;top:1302px;height:44px;background:#c9c2d9"></div>
<div class="vl" style="left:1815px;top:1346px;height:46px;background:#86b672"></div>
<div class="vl" style="left:1815px;top:1392px;height:17px;background:#e1e1e1"></div>
<div class="vl" style="left:1932px;top:325px;height:32px;background:#d9d6c4"></div>
<div class="vl" style="left:1932px;top:357px;height:50px;background:#85bd88"></div>
<div class="vl" style="left:1932px;top:413px;height:32px;background:#d5dce8"></div>
<div class="vl" style="left:1932px;top:445px;height:28px;background:#e1e1e1"></div>
<div class="vl" style="left:1932px;top:505px;height:32px;background:#e1e1e1"></div>
<div class="vl" style="left:1932px;top:537px;height:32px;background:#e1e1e1"></div>
<div class="vl" style="left:1932px;top:569px;height:32px;background:#e1e1e1"></div>
<div class="vl" style="left:1932px;top:601px;height:56px;background:#e1e1e1"></div>
<div class="vl" style="left:1932px;top:657px;height:56px;background:#e1e1e1"></div>
<div class="vl" style="left:1932px;top:713px;height:28px;background:#e1e1e1"></div>
<div class="vl" style="left:1932px;top:773px;height:32px;background:#e1e1e1"></div>
<div class="vl" style="left:1932px;top:805px;height:32px;background:#e1e1e1"></div>
<div class="vl" style="left:1932px;top:837px;height:32px;background:#e1e1e1"></div>
<div class="vl" style="left:1932px;top:869px;height:29px;background:#e1e1e1"></div>
<div class="vl" style="left:1932px;top:930px;height:32px;background:#e1e1e1"></div>
<div class="vl" style="left:1932px;top:962px;height:32px;background:#e1e1e1"></div>
<div class="vl" style="left:1932px;top:994px;height:32px;background:#e1e1e1"></div>
<div class="vl" style="left:1932px;top:1026px;height:32px;background:#e1e1e1"></div>
<div class="vl" style="left:1932px;top:1058px;height:28px;background:#e1e1e1"></div>
<div class="vl" style="left:1932px;top:1088px;height:52px;background:#d4d4d4"></div>
<div class="vl" style="left:1932px;top:1172px;height:32px;background:#e1e1e1"></div>
<div class="vl" style="left:1932px;top:1204px;height:32px;background:#e1e1e1"></div>
<div class="vl" style="left:1932px;top:1236px;height:32px;background:#e1e1e1"></div>
<div class="vl" style="left:1932px;top:1268px;height:32px;background:#e1e1e1"></div>
<div class="vl" style="left:1932px;top:1302px;height:44px;background:#c9c2d9"></div>
<div class="vl" style="left:1932px;top:1346px;height:46px;background:#86b672"></div>
<div class="vl" style="left:1932px;top:1392px;height:17px;background:#e1e1e1"></div>
<div class="a" style="left:161px;top:293px;width:1px;height:1117px;background:#c4c7c9;"></div>
<div class="hl" style="left:100px;top:356px;width:62px;background:linear-gradient(#e2e3e5 50%,#c9cacc 50%)"></div>
<div class="hl" style="left:100px;top:444px;width:62px;background:linear-gradient(#e2e3e5 50%,#c9cacc 50%)"></div>
<div class="hl" style="left:100px;top:472px;width:62px;background:linear-gradient(#e2e3e5 50%,#c9cacc 50%)"></div>
<div class="hl" style="left:100px;top:504px;width:62px;background:linear-gradient(#e2e3e5 50%,#c9cacc 50%)"></div>
<div class="hl" style="left:100px;top:536px;width:62px;background:linear-gradient(#e2e3e5 50%,#c9cacc 50%)"></div>
<div class="hl" style="left:100px;top:568px;width:62px;background:linear-gradient(#e2e3e5 50%,#c9cacc 50%)"></div>
<div class="hl" style="left:100px;top:600px;width:62px;background:linear-gradient(#e2e3e5 50%,#c9cacc 50%)"></div>
<div class="hl" style="left:100px;top:656px;width:62px;background:linear-gradient(#e2e3e5 50%,#c9cacc 50%)"></div>
<div class="hl" style="left:100px;top:712px;width:62px;background:linear-gradient(#e2e3e5 50%,#c9cacc 50%)"></div>
<div class="hl" style="left:100px;top:740px;width:62px;background:linear-gradient(#e2e3e5 50%,#c9cacc 50%)"></div>
<div class="hl" style="left:100px;top:772px;width:62px;background:linear-gradient(#e2e3e5 50%,#c9cacc 50%)"></div>
<div class="hl" style="left:100px;top:804px;width:62px;background:linear-gradient(#e2e3e5 50%,#c9cacc 50%)"></div>
<div class="hl" style="left:100px;top:836px;width:62px;background:linear-gradient(#e2e3e5 50%,#c9cacc 50%)"></div>
<div class="hl" style="left:100px;top:868px;width:62px;background:linear-gradient(#e2e3e5 50%,#c9cacc 50%)"></div>
<div class="hl" style="left:100px;top:897px;width:62px;background:linear-gradient(#e2e3e5 50%,#c9cacc 50%)"></div>
<div class="hl" style="left:100px;top:929px;width:62px;background:linear-gradient(#e2e3e5 50%,#c9cacc 50%)"></div>
<div class="hl" style="left:100px;top:961px;width:62px;background:linear-gradient(#e2e3e5 50%,#c9cacc 50%)"></div>
<div class="hl" style="left:100px;top:993px;width:62px;background:linear-gradient(#e2e3e5 50%,#c9cacc 50%)"></div>
<div class="hl" style="left:100px;top:1025px;width:62px;background:linear-gradient(#e2e3e5 50%,#c9cacc 50%)"></div>
<div class="hl" style="left:100px;top:1057px;width:62px;background:linear-gradient(#e2e3e5 50%,#c9cacc 50%)"></div>
<div class="hl" style="left:100px;top:1085px;width:62px;background:linear-gradient(#e2e3e5 50%,#c9cacc 50%)"></div>
<div class="hl" style="left:100px;top:1139px;width:62px;background:linear-gradient(#e2e3e5 50%,#c9cacc 50%)"></div>
<div class="hl" style="left:100px;top:1171px;width:62px;background:linear-gradient(#e2e3e5 50%,#c9cacc 50%)"></div>
<div class="hl" style="left:100px;top:1203px;width:62px;background:linear-gradient(#e2e3e5 50%,#c9cacc 50%)"></div>
<div class="hl" style="left:100px;top:1235px;width:62px;background:linear-gradient(#e2e3e5 50%,#c9cacc 50%)"></div>
<div class="hl" style="left:100px;top:1267px;width:62px;background:linear-gradient(#e2e3e5 50%,#c9cacc 50%)"></div>
<div class="hl" style="left:100px;top:1299px;width:62px;background:linear-gradient(#e2e3e5 50%,#c9cacc 50%)"></div>
<div class="hl" style="left:100px;top:1345px;width:62px;background:linear-gradient(#e2e3e5 50%,#c9cacc 50%)"></div>
<div class="hl" style="left:100px;top:1391px;width:62px;background:linear-gradient(#e2e3e5 50%,#c9cacc 50%)"></div>
<div class="hl" style="left:100px;top:1423px;width:62px;background:linear-gradient(#e2e3e5 50%,#c9cacc 50%)"></div>
<div class="a" style="left:100px;top:325px;width:1833px;height:1px;background:#c4c7c9;"></div>
<div class="ch" style="left:162px;width:355px">A</div>
<div class="ch" style="left:523.0px;width:117.5px">B</div>
<div class="a" style="left:639px;top:293px;width:1px;height:32px;background:#c4c7c9;"></div>
<div class="ch" style="left:640.5px;width:117.5px">C</div>
<div class="a" style="left:757px;top:293px;width:1px;height:32px;background:#c4c7c9;"></div>
<div class="ch" style="left:758.0px;width:117.5px">D</div>
<div class="a" style="left:875px;top:293px;width:1px;height:32px;background:#c4c7c9;"></div>
<div class="ch" style="left:875.5px;width:117.5px">E</div>
<div class="a" style="left:992px;top:293px;width:1px;height:32px;background:#c4c7c9;"></div>
<div class="ch" style="left:993.0px;width:117.5px">F</div>
<div class="a" style="left:1109px;top:293px;width:1px;height:32px;background:#c4c7c9;"></div>
<div class="ch" style="left:1110.5px;width:117.5px">G</div>
<div class="a" style="left:1227px;top:293px;width:1px;height:32px;background:#c4c7c9;"></div>
<div class="ch" style="left:1228.0px;width:117.5px">H</div>
<div class="a" style="left:1345px;top:293px;width:1px;height:32px;background:#c4c7c9;"></div>
<div class="ch" style="left:1345.5px;width:117.5px">I</div>
<div class="a" style="left:1462px;top:293px;width:1px;height:32px;background:#c4c7c9;"></div>
<div class="ch" style="left:1463.0px;width:117.5px">J</div>
<div class="a" style="left:1579px;top:293px;width:1px;height:32px;background:#c4c7c9;"></div>
<div class="ch" style="left:1580.5px;width:117.5px">K</div>
<div class="a" style="left:1697px;top:293px;width:1px;height:32px;background:#c4c7c9;"></div>
<div class="ch" style="left:1698.0px;width:117.5px">L</div>
<div class="a" style="left:1815px;top:293px;width:1px;height:32px;background:#c4c7c9;"></div>
<div class="ch" style="left:1815.5px;width:117.5px">M</div>
<div class="a" style="left:1932px;top:293px;width:1px;height:32px;background:#c4c7c9;"></div>
<div class="a" style="left:1933px;top:293px;width:15px;height:1131px;background:#fff;"></div>
<div class="a" style="left:1933px;top:294px;width:15px;height:114px;background:#f8f9fa;"></div>
<div class="a" style="left:1933px;top:407.5px;width:15px;height:5.5px;background:#dde1ea;"></div>
<div class="a" style="left:1932px;top:446px;width:1px;height:964px;background:#dfdfdf;"></div>
<div class="rh" style="top:333.5px">1</div>
<div class="rh" style="top:374.5px">2</div>
<div class="rh" style="top:421.5px">5</div>
<div class="rh" style="top:451.5px">13</div>
<div class="rh" style="top:481.5px">14</div>
<div class="rh" style="top:513.5px">15</div>
<div class="rh" style="top:545.5px">16</div>
<div class="rh" style="top:577.5px">18</div>
<div class="rh" style="top:621.5px">19</div>
<div class="rh" style="top:677.5px">23</div>
<div class="rh" style="top:719.5px">25</div>
<div class="rh" style="top:749.5px">26</div>
<div class="rh" style="top:781.5px">27</div>
<div class="rh" style="top:813.5px">28</div>
<div class="rh" style="top:845.5px">29</div>
<div class="rh" style="top:876.0px">32</div>
<div class="rh" style="top:906.5px">33</div>
<div class="rh" style="top:938.5px">34</div>
<div class="rh" style="top:970.5px">35</div>
<div class="rh" style="top:1002.5px">36</div>
<div class="rh" style="top:1034.5px">37</div>
<div class="rh" style="top:1064.5px">38</div>
<div class="rh" style="top:1106.5px">43</div>
<div class="rh" style="top:1148.5px">44</div>
<div class="rh" style="top:1180.5px">45</div>
<div class="rh" style="top:1212.5px">46</div>
<div class="rh" style="top:1244.5px">47</div>
<div class="rh" style="top:1276.5px">48</div>
<div class="rh" style="top:1316.5px">53</div>
<div class="rh" style="top:1361.5px">54</div>
<div class="rh" style="top:1399.6px;height:10px;overflow:hidden">57</div>
<svg class="a" style="left:105.5px;top:433.3px" width="9" height="5.4" viewBox="0 0 9 5"><path d="M0 5 L4.5 0 L9 5Z" fill="#000"/></svg>
<svg class="a" style="left:105.5px;top:557.3px" width="9" height="5.4" viewBox="0 0 9 5"><path d="M0 5 L4.5 0 L9 5Z" fill="#000"/></svg>
<svg class="a" style="left:105.5px;top:645.3px" width="9" height="5.4" viewBox="0 0 9 5"><path d="M0 5 L4.5 0 L9 5Z" fill="#000"/></svg>
<svg class="a" style="left:105.5px;top:701.3px" width="9" height="5.4" viewBox="0 0 9 5"><path d="M0 5 L4.5 0 L9 5Z" fill="#000"/></svg>
<svg class="a" style="left:105.5px;top:857.3px" width="9" height="5.4" viewBox="0 0 9 5"><path d="M0 5 L4.5 0 L9 5Z" fill="#000"/></svg>
<svg class="a" style="left:105.5px;top:1074.3px" width="9" height="5.4" viewBox="0 0 9 5"><path d="M0 5 L4.5 0 L9 5Z" fill="#000"/></svg>
<svg class="a" style="left:105.5px;top:1288.3px" width="9" height="5.4" viewBox="0 0 9 5"><path d="M0 5 L4.5 0 L9 5Z" fill="#000"/></svg>
<svg class="a" style="left:105.5px;top:1380.3px" width="9" height="5.4" viewBox="0 0 9 5"><path d="M0 5 L4.5 0 L9 5Z" fill="#000"/></svg>
<svg class="a" style="left:105.5px;top:451.8px" width="9" height="5.4" viewBox="0 0 9 5"><path d="M0 0 H9 L4.5 5Z" fill="#000"/></svg>
<svg class="a" style="left:105.5px;top:575.8px" width="9" height="5.4" viewBox="0 0 9 5"><path d="M0 0 H9 L4.5 5Z" fill="#000"/></svg>
<svg class="a" style="left:105.5px;top:663.8px" width="9" height="5.4" viewBox="0 0 9 5"><path d="M0 0 H9 L4.5 5Z" fill="#000"/></svg>
<svg class="a" style="left:105.5px;top:719.8px" width="9" height="5.4" viewBox="0 0 9 5"><path d="M0 0 H9 L4.5 5Z" fill="#000"/></svg>
<svg class="a" style="left:105.5px;top:875.8px" width="9" height="5.4" viewBox="0 0 9 5"><path d="M0 0 H9 L4.5 5Z" fill="#000"/></svg>
<svg class="a" style="left:105.5px;top:1094.8px" width="9" height="5.4" viewBox="0 0 9 5"><path d="M0 0 H9 L4.5 5Z" fill="#000"/></svg>
<svg class="a" style="left:105.5px;top:1308.8px" width="9" height="5.4" viewBox="0 0 9 5"><path d="M0 0 H9 L4.5 5Z" fill="#000"/></svg>
<svg class="a" style="left:105.5px;top:1398.8px" width="9" height="5.4" viewBox="0 0 9 5"><path d="M0 0 H9 L4.5 5Z" fill="#000"/></svg>
<div class="c " style="left:166.3px;top:330.0px;">Даты —</div>
<div class="c " style="left:527.6px;top:330.0px;letter-spacing:-.35px">1 августа</div>
<div class="c " style="left:645.1px;top:330.0px;letter-spacing:-.35px">2 августа</div>
<div class="c " style="left:762.6px;top:330.0px;letter-spacing:-.35px">3 августа</div>
<div class="c " style="left:880.1px;top:330.0px;letter-spacing:-.35px">4 августа</div>
<div class="c " style="left:997.6px;top:330.0px;letter-spacing:-.35px">5 августа</div>
<div class="c " style="left:1115.1px;top:330.0px;letter-spacing:-.35px">6 августа</div>
<div class="c " style="left:1232.6px;top:330.0px;letter-spacing:-.35px">7 августа</div>
<div class="c " style="left:1350.1px;top:330.0px;letter-spacing:-.35px">8 августа</div>
<div class="c " style="left:1467.6px;top:330.0px;letter-spacing:-.35px">9 августа</div>
<div class="c " style="left:1585.1px;top:330.0px;letter-spacing:-.35px">10 августа</div>
<div class="c " style="left:1702.6px;top:330.0px;letter-spacing:-.35px">11 августа</div>
<div class="c " style="left:1820.1px;top:330.0px;letter-spacing:-.35px">12 августа</div>
<div class="c b" style="left:166.3px;top:371.1px;color:#fff">Остаток на начало дня —</div>
<div class="c b" style="left:527.6px;top:371.1px;font-size:18.5px;color:#000;letter-spacing:0">500 000,00</div>
<div class="c b" style="left:645.1px;top:371.1px;font-size:18.5px;color:#e7f3e7;letter-spacing:0">820 000,00</div>
<div class="c b" style="left:762.6px;top:371.1px;font-size:18.5px;color:#e7f3e7;letter-spacing:0">885 000,00</div>
<div class="c b" style="left:880.1px;top:371.1px;font-size:18.5px;color:#e7f3e7;letter-spacing:0">820 000,00</div>
<div class="c b" style="left:997.6px;top:371.1px;font-size:18.5px;color:#e7f3e7;letter-spacing:0">2 495 000,00</div>
<div class="c b" style="left:1115.1px;top:371.1px;font-size:18.5px;color:#e7f3e7;letter-spacing:0">2 615 000,00</div>
<div class="c b" style="left:1232.6px;top:371.1px;font-size:18.5px;color:#e7f3e7;letter-spacing:0">2 438 000,00</div>
<div class="c b" style="left:1350.1px;top:371.1px;font-size:18.5px;color:#e7f3e7;letter-spacing:0">3 258 000,00</div>
<div class="c b" style="left:1467.6px;top:371.1px;font-size:18.5px;color:#e7f3e7;letter-spacing:0">3 360 500,00</div>
<div class="c b" style="left:1585.1px;top:371.1px;font-size:18.5px;color:#e7f3e7;letter-spacing:0">3 442 500,00</div>
<div class="c b" style="left:1702.6px;top:371.1px;font-size:18.5px;color:#e7f3e7;letter-spacing:0">3 647 000,00</div>
<div class="c b" style="left:1820.1px;top:371.1px;font-size:18.5px;color:#e7f3e7;letter-spacing:0">4 667 000,00</div>
<div class="c " style="left:166.3px;top:416.6px;">Поступления</div>
<div class="c " style="left:527.6px;top:418.3px;font-size:20.2px;letter-spacing:-.66px;">300 000,00</div>
<div class="c " style="left:880.1px;top:418.3px;font-size:20.2px;letter-spacing:-.66px;">1 600 000,00</div>
<div class="c " style="left:1232.6px;top:418.3px;font-size:20.2px;letter-spacing:-.66px;">1 000 000,00</div>
<div class="c " style="left:1585.1px;top:418.3px;font-size:20.2px;letter-spacing:-.66px;">312 000,00</div>
<div class="c b" style="left:166.3px;top:476.6px;">— Административные расходы</div>
<div class="c " style="left:166.3px;top:508.6px;">Аренда</div>
<div class="c " style="left:645.1px;top:510.3px;font-size:20.2px;letter-spacing:-.66px;">-110 000,00</div>
<div class="c " style="left:166.3px;top:540.6px;">Коммунальные расходы</div>
<div class="c " style="left:1467.6px;top:542.3px;font-size:20.2px;letter-spacing:-.66px;">-58 000,00</div>
<div class="c " style="left:166.3px;top:572.6px;">Найм персонала</div>
<div class="c " style="left:762.6px;top:574.3px;font-size:20.2px;letter-spacing:-.66px;">-15 000,00</div>
<div class="c " style="left:166.3px;top:606.4px;">Связь, Интернет, почтовые расходы,<br>ПО</div>
<div class="c " style="left:1350.1px;top:607.3px;font-size:20.2px;letter-spacing:-.66px;">-10 000,00</div>
<div class="c " style="left:166.3px;top:662.0px;">Зарплата административного<br>персонала</div>
<div class="c " style="left:880.1px;top:662.6px;font-size:20.2px;letter-spacing:-.66px;">-140 000,00</div>
<div class="c " style="left:1820.1px;top:662.6px;font-size:20.2px;letter-spacing:-.66px;">-200 000,00</div>
<div class="c b" style="left:166.3px;top:744.6px;">— Производственные расходы</div>
<div class="c " style="left:166.3px;top:776.6px;">Покупка бумаги</div>
<div class="c " style="left:527.6px;top:778.3px;font-size:20.2px;letter-spacing:-.66px;">-180 000,00</div>
<div class="c " style="left:1232.6px;top:778.3px;font-size:20.2px;letter-spacing:-.66px;">-180 000,00</div>
<div class="c " style="left:166.3px;top:808.6px;">Покупка картона</div>
<div class="c " style="left:645.1px;top:810.3px;font-size:20.2px;letter-spacing:-.66px;">-125 000,00</div>
<div class="c " style="left:1585.1px;top:810.3px;font-size:20.2px;letter-spacing:-.66px;">-25 000,00</div>
<div class="c " style="left:166.3px;top:840.6px;">Покупка картриджей</div>
<div class="c " style="left:1115.1px;top:842.3px;font-size:20.2px;letter-spacing:-.66px;">-152 000,00</div>
<div class="c b" style="left:166.3px;top:901.6px;">Налоги</div>
<div class="c " style="left:166.3px;top:933.6px;">Налог на землю, аванс</div>
<div class="c " style="left:762.6px;top:935.3px;font-size:20.2px;letter-spacing:-.66px;">-50 000,00</div>
<div class="c " style="left:166.3px;top:965.6px;">Налог на прибыль, аванс</div>
<div class="c " style="left:1585.1px;top:967.3px;font-size:20.2px;letter-spacing:-.66px;">-82 500,00</div>
<div class="c " style="left:166.3px;top:997.6px;">Транспортный налог, аванс</div>
<div class="c " style="left:1115.1px;top:999.3px;font-size:20.2px;letter-spacing:-.66px;">-25 000,00</div>
<div class="c " style="left:166.3px;top:1029.6px;">Налог на имущество, аванс</div>
<div class="c " style="left:1350.1px;top:1031.3px;font-size:20.2px;letter-spacing:-.66px;">-37 500,00</div>
<div class="c " style="left:166.3px;top:1102.8px;"><span style="font-size:21px;line-height:10px;display:inline-block;transform:translateY(1px) scaleX(1.25);margin:0 4px 0 1px">↓</span>Поступления (сумма)</div>
<div class="c " style="left:527.6px;top:1103.0px;font-size:17.3px;">200 000,00</div>
<div class="c " style="left:645.1px;top:1103.0px;font-size:17.3px;">300 000,00</div>
<div class="c " style="left:762.6px;top:1103.0px;font-size:17.3px;">0,00</div>
<div class="c " style="left:880.1px;top:1103.0px;font-size:17.3px;">215 000,00</div>
<div class="c " style="left:997.6px;top:1103.0px;font-size:17.3px;">120 000,00</div>
<div class="c " style="left:1115.1px;top:1103.0px;font-size:17.3px;">0,00</div>
<div class="c " style="left:1232.6px;top:1103.0px;font-size:17.3px;">0,00</div>
<div class="c " style="left:1350.1px;top:1103.0px;font-size:17.3px;">150 000,00</div>
<div class="c " style="left:1467.6px;top:1103.0px;font-size:17.3px;">140 000,00</div>
<div class="c " style="left:1585.1px;top:1103.0px;font-size:17.3px;">0,00</div>
<div class="c " style="left:1702.6px;top:1103.0px;font-size:17.3px;">1 020 000,00</div>
<div class="c " style="left:1820.1px;top:1103.0px;font-size:17.3px;">75 000,00</div>
<div class="c b" style="left:166.3px;top:1143.6px;">— Поступления от клиентов</div>
<div class="c " style="left:166.3px;top:1175.6px;">Клиент 1</div>
<div class="c " style="left:645.1px;top:1177.3px;font-size:20.2px;letter-spacing:-.66px;">300 000,00</div>
<div class="c " style="left:997.6px;top:1177.3px;font-size:20.2px;letter-spacing:-.66px;">120 000,00</div>
<div class="c " style="left:1702.6px;top:1177.3px;font-size:20.2px;letter-spacing:-.66px;">120 000,00</div>
<div class="c " style="left:166.3px;top:1207.6px;">Клиент 2</div>
<div class="c " style="left:527.6px;top:1209.3px;font-size:20.2px;letter-spacing:-.66px;">200 000,00</div>
<div class="c " style="left:880.1px;top:1209.3px;font-size:20.2px;letter-spacing:-.66px;">140 000,00</div>
<div class="c " style="left:1467.6px;top:1209.3px;font-size:20.2px;letter-spacing:-.66px;">140 000,00</div>
<div class="c " style="left:166.3px;top:1239.6px;">Клиент 3</div>
<div class="c " style="left:1350.1px;top:1241.3px;font-size:20.2px;letter-spacing:-.66px;">150 000,00</div>
<div class="c " style="left:1702.6px;top:1241.3px;font-size:20.2px;letter-spacing:-.66px;">900 000,00</div>
<div class="c " style="left:166.3px;top:1271.6px;">Клиент 4</div>
<div class="c " style="left:880.1px;top:1273.3px;font-size:20.2px;letter-spacing:-.66px;">75 000,00</div>
<div class="c " style="left:1820.1px;top:1273.3px;font-size:20.2px;letter-spacing:-.66px;">75 000,00</div>
<div class="c " style="left:166.3px;top:1312.1px;">Изменения за день</div>
<div class="c " style="left:527.6px;top:1313.5px;font-size:17.3px;">320 000,00</div>
<div class="c " style="left:645.1px;top:1313.5px;font-size:17.3px;">65 000,00</div>
<div class="c " style="left:762.6px;top:1313.5px;font-size:17.3px;">-65 000,00</div>
<div class="c " style="left:880.1px;top:1313.5px;font-size:17.3px;">1 675 000,00</div>
<div class="c " style="left:997.6px;top:1313.5px;font-size:17.3px;">120 000,00</div>
<div class="c " style="left:1115.1px;top:1313.5px;font-size:17.3px;">-177 000,00</div>
<div class="c " style="left:1232.6px;top:1313.5px;font-size:17.3px;">820 000,00</div>
<div class="c " style="left:1350.1px;top:1313.5px;font-size:17.3px;">102 500,00</div>
<div class="c " style="left:1467.6px;top:1313.5px;font-size:17.3px;">82 000,00</div>
<div class="c " style="left:1585.1px;top:1313.5px;font-size:17.3px;">204 500,00</div>
<div class="c " style="left:1702.6px;top:1313.5px;font-size:17.3px;">1 020 000,00</div>
<div class="c " style="left:1820.1px;top:1313.5px;font-size:17.3px;">-125 000,00</div>
<div class="c b" style="left:166.3px;top:1358.8px;color:#fff">Остаток на конец дня —</div>
<div class="c " style="left:527.6px;top:1359.3px;font-size:17.3px;color:#fff">820 000,00</div>
<div class="c " style="left:645.1px;top:1359.3px;font-size:17.3px;color:#fff">885 000,00</div>
<div class="c " style="left:762.6px;top:1359.3px;font-size:17.3px;color:#fff">820 000,00</div>
<div class="c " style="left:880.1px;top:1359.3px;font-size:17.3px;color:#fff">2 495 000,00</div>
<div class="c " style="left:997.6px;top:1359.3px;font-size:17.3px;color:#fff">2 615 000,00</div>
<div class="c " style="left:1115.1px;top:1359.3px;font-size:17.3px;color:#fff">2 438 000,00</div>
<div class="c " style="left:1232.6px;top:1359.3px;font-size:17.3px;color:#fff">3 258 000,00</div>
<div class="c " style="left:1350.1px;top:1359.3px;font-size:17.3px;color:#fff">3 360 500,00</div>
<div class="c " style="left:1467.6px;top:1359.3px;font-size:17.3px;color:#fff">3 442 500,00</div>
<div class="c " style="left:1585.1px;top:1359.3px;font-size:17.3px;color:#fff">3 647 000,00</div>
<div class="c " style="left:1702.6px;top:1359.3px;font-size:17.3px;color:#fff">4 667 000,00</div>
<div class="c " style="left:1820.1px;top:1359.3px;font-size:17.3px;color:#fff">4 542 000,00</div>
<div class="a" style="left:162px;top:324.5px;width:1771px;height:121.5px;border:2px solid #1a73e8;border-right:none;border-left-width:1.5px"></div>
<div class="a" style="left:161.5px;top:324px;width:356.5px;height:33.5px;border:2.5px solid #1a73e8"></div>
<div class="a" style="left:517px;top:326.5px;width:6px;height:1083px;background:#dde1ea;"></div>
<div class="a" style="left:100px;top:1409px;width:423px;height:16px;background:#f8f9fa;"></div>
<div class="a" style="left:523px;top:1409px;width:1410px;height:15px;background:#fff;"></div>
<div class="a" style="left:526px;top:1410.5px;width:525px;height:11.5px;border-radius:6px;background:#dadce0"></div>
<div class="a" style="left:1893px;top:1409px;width:40px;height:15px;background:#f8f9fa;border:1px solid #dcdcdc"></div>
<div class="a" style="left:1912.5px;top:1409px;width:1px;height:15px;background:#dcdcdc;"></div>
<svg class="a" style="left:1899px;top:1412.5px" width="6" height="8" viewBox="0 0 6 8"><path d="M6 0 V8 L0 4Z" fill="#b4b8bc"/></svg>
<svg class="a" style="left:1920px;top:1412.5px" width="6" height="8" viewBox="0 0 6 8"><path d="M0 0 V8 L6 4Z" fill="#b4b8bc"/></svg>
<div class="a" style="left:1935.5px;top:416px;width:11.5px;height:33.5px;border-radius:6px;background:#dadce0"></div>
<div class="a" style="left:1933px;top:1366px;width:15px;height:44px;background:#f8f9fa;border:1px solid #e2e2e2"></div>
<div class="a" style="left:1933px;top:1387px;width:15px;height:1px;background:#e2e2e2;"></div>
<svg class="a" style="left:1937.5px;top:1374px" width="8" height="6" viewBox="0 0 8 6"><path d="M0 6 H8 L4 0Z" fill="#c0c3c7"/></svg>
<svg class="a" style="left:1937.5px;top:1394.5px" width="8" height="6" viewBox="0 0 8 6"><path d="M0 0 H8 L4 6Z" fill="#c0c3c7"/></svg>
<div class="a" style="left:513px;top:1339.5px;width:1426.5px;height:60.5px;border:2px solid #ff2d0a"></div>
<div class="a" style="left:100px;top:1424px;width:1848px;height:54px;background:#f1f3f4;"></div>
<div class="a" style="left:100px;top:1424px;width:1848px;height:1px;background:#e3e4e6;"></div>
<svg class="a" style="left:167px;top:1441.3px" width="18" height="18" viewBox="0 0 18 18" stroke="#686b70" stroke-width="2.6" fill="none"><path d="M9 2.5 V15.5 M2.5 9 H15.5"/></svg>
<div class="a" style="left:210px;top:1443.2px;width:16.5px;height:2.2px;background:#686b70;"></div>
<div class="a" style="left:210px;top:1447.5px;width:16.5px;height:2.2px;background:#686b70;"></div>
<div class="a" style="left:210px;top:1451.8px;width:16.5px;height:2.2px;background:#686b70;"></div>
<div class="a" style="left:210px;top:1456.1px;width:16.5px;height:2.2px;background:#686b70;"></div>
<div class="a" style="left:246px;top:1425px;width:5px;height:53px;background:#dcdddf;"></div>
<div class="a" style="left:251px;top:1425px;width:4px;height:53px;background:#eceef0;"></div>
<div class="a" style="left:255px;top:1425px;width:309px;height:53px;background:#fff;"></div>
<div class="a" style="left:564px;top:1425px;width:4px;height:53px;background:linear-gradient(90deg,rgba(0,0,0,.10),rgba(0,0,0,0))"></div>
<div class="st" style="left:272.5px;color:#188038;-webkit-text-stroke:.5px #188038;letter-spacing:.37px">Платежный календарь V2</div>
<svg class="a" style="left:530.5px;top:1448.5px" width="11" height="5.5" viewBox="0 0 10 5"><path d="M0 0 H10 L5 5Z" fill="#188038"/></svg>
<div class="st" style="left:586.5px;letter-spacing:.8px">Календарь</div>
<svg class="a" style="left:704.5px;top:1448.5px" width="11" height="5.5" viewBox="0 0 10 5"><path d="M0 0 H10 L5 5Z" fill="#80868b"/></svg>
<div class="st" style="left:760px;letter-spacing:.42px">Плановый Реестр поступлений</div>
<svg class="a" style="left:1070.5px;top:1448.5px" width="11" height="5.5" viewBox="0 0 10 5"><path d="M0 0 H10 L5 5Z" fill="#80868b"/></svg>
<div class="st" style="left:1126.5px;letter-spacing:.26px">Плановые Реестр выбытий</div>
<svg class="a" style="left:1394.5px;top:1448.5px" width="11" height="5.5" viewBox="0 0 10 5"><path d="M0 0 H10 L5 5Z" fill="#80868b"/></svg>
<div class="a" style="left:567px;top:1472px;width:171px;height:6px;background:#0000f5;"></div>
<div class="a" style="left:738px;top:1472px;width:366px;height:6px;background:#00f900;"></div>
<div class="a" style="left:1104px;top:1472px;width:316px;height:6px;background:#ff9300;"></div>
<div class="a" style="left:737.5px;top:1425px;width:1px;height:47px;background:#e0e2e4;"></div>
<div class="a" style="left:1103.5px;top:1425px;width:1px;height:47px;background:#e0e2e4;"></div>
<div class="a" style="left:1420px;top:1425px;width:8px;height:53px;background:linear-gradient(90deg,rgba(0,0,0,.13),rgba(0,0,0,0))"></div>
<svg class="a" style="left:1447.5px;top:1443px" width="8" height="14" viewBox="0 0 8 14"><path d="M8 0 V14 L0 7Z" fill="#5f6368"/></svg>
<svg class="a" style="left:1489.5px;top:1443px" width="8" height="14" viewBox="0 0 8 14"><path d="M0 0 V14 L8 7Z" fill="#5f6368"/></svg>
<div class="a" style="left:1575.5px;top:1432px;width:153px;height:39px;border-radius:5px;background:#fff;border:1.5px solid #dadce0"></div>
<div class="t" style="left:1584px;top:1443.5px;font-size:15px;color:#333;-webkit-text-stroke:.3px #333">Количество: 104</div>
<svg class="a" style="left:1706.5px;top:1449px" width="10.5" height="5.2" viewBox="0 0 10 5"><path d="M0 0 H10 L5 5Z" fill="#5f6368"/></svg>
<div class="a" style="left:1742px;top:1425px;width:1.5px;height:53px;background:#dadce0;"></div>
<div class="a" style="left:1743.5px;top:1425px;width:205px;height:53px;background:#fff;"></div>
<svg class="a" style="left:1757px;top:1436px" width="28" height="32" viewBox="0 0 28 32"><path d="M4 1.5 H23 a3 3 0 0 1 3 3 V22 a3 3 0 0 1-3 3 H18 L14 29.5 L10 25 H4.5 a3 3 0 0 1-3-3 V4.5 a3 3 0 0 1 3-3Z" fill="#129e57"/><path d="M13.7 5 C14.3 10 16.5 12.4 21.8 13.2 C16.5 14 14.3 16.4 13.7 21.6 C13.1 16.4 10.9 14 5.6 13.2 C10.9 12.4 13.1 10 13.7 5Z" fill="#fff"/></svg>
<div class="t" style="left:1802.5px;top:1442.5px;font-size:16.4px;color:#1a9657;-webkit-text-stroke:.35px #1a9657">Анализ данных</div>
</div>
</body></html>
